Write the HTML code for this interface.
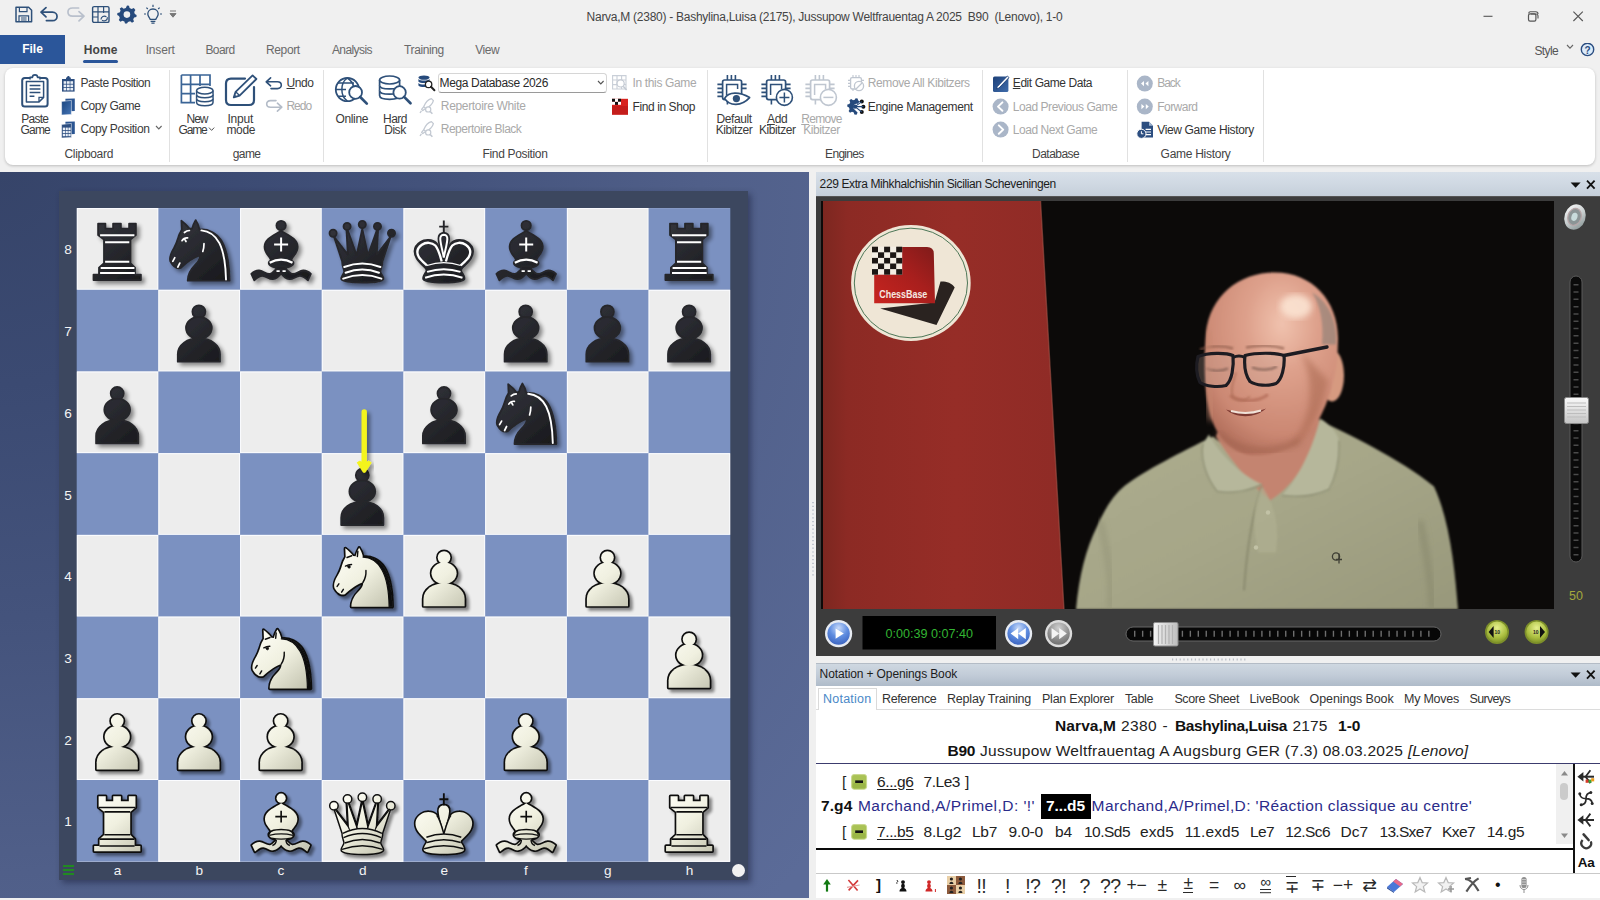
<!DOCTYPE html>
<html lang="en">
<head>
<meta charset="utf-8">
<title>ChessBase</title>
<style>
*{box-sizing:border-box;margin:0;padding:0}
html,body{width:1600px;height:900px;overflow:hidden}
body{position:relative;background:#f0f0f0;font-family:"Liberation Sans",sans-serif;font-size:12px;color:#333;}
.abs{position:absolute}
.t{position:absolute;white-space:nowrap;line-height:14px;font-size:12px;color:#3a3a3a}
.dis{color:#a9a9a9}
u{text-decoration-thickness:1px;text-underline-offset:.5px}
/* ---------- title / tabs ---------- */
#title{left:0;top:0;width:1600px;height:34px;background:#f0f0f0}
#tabs{left:0;top:34px;width:1600px;height:33px;background:#f0f0f0}
#file{left:0;top:35px;width:65px;height:29px;background:#2b569a;color:#fff;font-weight:bold;font-size:12px;line-height:28px;text-align:center}
.tab{position:absolute;top:43px;font-size:12px;line-height:14px;color:#666;white-space:nowrap}
#ribbon{left:5px;top:68px;width:1590px;height:97px;background:#fff;border-radius:8px;box-shadow:0 1px 3px rgba(0,0,0,.22)}
.sep{position:absolute;top:70px;width:1px;height:92px;background:#e1e1e1}
.glabel{position:absolute;top:146px;font-size:12px;line-height:14px;color:#444;white-space:nowrap;transform:translateX(-50%)}
.big{position:absolute;font-size:12px;line-height:11.5px;color:#3a3a3a;text-align:center;white-space:nowrap;transform:translateX(-50%)}
/* ---------- board ---------- */
#boardpane{left:0;top:172px;width:809px;height:726px;background:radial-gradient(circle 1060px at 0% 0%,#364469 0%,#3b4a72 20%,#44537c 42%,#505f89 66%,#5b6b98 100%)}
#frame{left:59.3px;top:191.2px;width:689.2px;height:688.8px;background:#3c475f;box-shadow:3px 3px 6px rgba(20,25,50,.45)}
#squares{left:76.7px;top:208.1px;width:653.5px;height:654px;background:#ededed}
.coord{position:absolute;color:#f4f4f4;font-size:13.6px;line-height:14px;width:20px;text-align:center}
/* ---------- right panes ---------- */
#split{left:810px;top:172px;width:6px;height:726px;background:#f0f0f0}
.phead{position:absolute;left:816px;width:784px;height:23px;background:linear-gradient(#d8e0e9,#cfd8e2 50%,#c4ced9);color:#1c1c1c;font-size:12px;line-height:23px;padding-left:3px;white-space:nowrap}
#video{left:816px;top:196px;width:784px;height:460px;background:#3c3c3c;border-top:1px solid #555}
#notation{left:816px;top:686px;width:784px;height:212px;background:#fff}
</style>
</head>
<body>
<div id="title" class="abs"></div>
<div id="tabs" class="abs"></div>
<div id="file" class="abs">File</div>
<div id="ribbon" class="abs"></div>
<div class="t " style="left:586.6px;top:9.8px;font-size:12px;color:#444;letter-spacing:-0.27px;">Narva,M (2380) - Bashylina,Luisa (2175), Jussupow Weltfrauentag A 2025&nbsp; B90&nbsp; (Lenovo), 1-0</div>
<svg class="abs" style="left:14px;top:5px" width="20" height="19" viewBox="0 0 20 19"><path d="M2,2.2 H14.6 L17.6,5.2 V16.8 H2 Z" fill="none" stroke="#2e5079" stroke-width="1.5" stroke-linejoin="round"/><path d="M5.4,2.4 V6.6 H13 V2.4 M5,16.6 V10.8 H14.6 V16.6 M7,13 H12.6 M7,15 H12.6" fill="none" stroke="#2e5079" stroke-width="1.2"/></svg>
<svg class="abs" style="left:39px;top:6px" width="21" height="17" viewBox="0 0 21 17"><path d="M7,1.6 L2,6.2 L7,10.8 M2.4,6.2 H13.4 C19.6,6.2 19.6,14.6 13.4,14.6 H7.4" fill="none" stroke="#2e5079" stroke-width="1.7" stroke-linecap="round" stroke-linejoin="round"/></svg>
<svg class="abs" style="left:65px;top:6px" width="21" height="17" viewBox="0 0 21 17"><path d="M14,5.6 L19,10.2 L14,14.8 M18.6,10.2 H7.6 C1.4,10.2 1.4,2 7.6,2 H13.6" fill="none" stroke="#b9c0cc" stroke-width="1.7" stroke-linecap="round" stroke-linejoin="round"/></svg>
<svg class="abs" style="left:91px;top:5px" width="20" height="19" viewBox="0 0 20 19"><rect x="1.6" y="1.6" width="16.4" height="15.8" rx="1.5" fill="none" stroke="#2e5079" stroke-width="1.4"/><path d="M7,1.6 V17.4 M12.6,1.6 V8 M1.6,6.8 H18 M1.6,12 H7" stroke="#2e5079" stroke-width="1.2" fill="none"/><path d="M10,14.6 C10,11.6 13,10.2 15.4,11.8 M16.4,12.2 C16.6,15.4 13.4,16.8 11,15.2" stroke="#2e5079" stroke-width="1.2" fill="none"/></svg>
<svg class="abs" style="left:117px;top:5px" width="20" height="19" viewBox="0 0 20 19"><path d="M10,1 L12,1.3 L12.6,3.6 L14.6,4.6 L16.8,3.6 L18.4,5.6 L17.2,7.6 L17.8,9.6 L19.6,10.4 L19.4,12.6 L17.2,13 L16.2,14.8 L17,17 L15,18.2 L13.2,16.8 L11,17.4 L10,19 L8,19 L7.4,17 L5.4,16.2 L3.4,17.2 L1.8,15.4 L2.8,13.4 L2,11.4 L0.2,10.6 L0.4,8.4 L2.6,8 L3.6,6.2 L2.8,4 L4.8,2.8 L6.6,4.2 L8.8,3.6 Z" fill="#264a7c" transform="translate(0,-0.5)"/><circle cx="9.9" cy="9.6" r="3.3" fill="#f0f0f0"/></svg>
<svg class="abs" style="left:143px;top:4px" width="20" height="21" viewBox="0 0 20 21"><path d="M10,5 C6.6,5 4.8,7.6 4.8,10 C4.8,12.4 6.6,13.4 7.2,15.4 H12.8 C13.4,13.4 15.2,12.4 15.2,10 C15.2,7.6 13.4,5 10,5 Z M7.6,17.4 H12.4 M8.4,19.2 H11.6" fill="none" stroke="#2e5079" stroke-width="1.3"/><path d="M10,0.8 V3 M3.4,3.6 L4.8,5 M16.6,3.6 L15.2,5 M1,10 H3 M17,10 H19" stroke="#2e5079" stroke-width="1.2"/></svg>
<svg class="abs" style="left:169px;top:10px" width="8" height="9" viewBox="0 0 8 9"><path d="M1,1 H7 M1,3.6 H7 L4,7.2 Z" fill="#777" stroke="#777" stroke-width="1"/></svg>
<svg class="abs" style="left:1480px;top:8px" width="110" height="18" viewBox="0 0 110 18"><path d="M3.5,8.3 H12.5" stroke="#555" stroke-width="1.1"/><path d="M50.4,6 H55.6 Q57.6,6 57.6,8 V10.6 M48.4,5.4 Q48.4,3.8 50,3.8 H55.4 Q57.6,3.8 57.6,6" fill="none" stroke="#555" stroke-width="1.1" transform="translate(0.4,0)"/><rect x="48.5" y="5.8" width="7.4" height="7.4" rx="1.6" fill="none" stroke="#555" stroke-width="1.2"/><path d="M93.4,3.6 L102.8,13 M102.8,3.6 L93.4,13" stroke="#555" stroke-width="1.1"/></svg>
<div class="abs" style="left:82.6px;top:60.4px;width:35.6px;height:3px;border-radius:1.5px;background:#2b569a"></div>
<div class="t " style="left:83.8px;top:43.1px;font-size:12px;letter-spacing:0.115px;font-weight:bold;color:#444;">Home</div>
<div class="t " style="left:145.7px;top:43.1px;font-size:12px;letter-spacing:-0.185px;color:#6a6a6a;">Insert</div>
<div class="t " style="left:205.4px;top:43.1px;font-size:12px;letter-spacing:-0.584px;color:#6a6a6a;">Board</div>
<div class="t " style="left:266.0px;top:43.1px;font-size:12px;letter-spacing:-0.369px;color:#6a6a6a;">Report</div>
<div class="t " style="left:331.9px;top:43.1px;font-size:12px;letter-spacing:-0.573px;color:#6a6a6a;">Analysis</div>
<div class="t " style="left:404.1px;top:43.1px;font-size:12px;letter-spacing:-0.388px;color:#6a6a6a;">Training</div>
<div class="t " style="left:475.3px;top:43.1px;font-size:12px;letter-spacing:-0.473px;color:#6a6a6a;">View</div>
<div class="t " style="left:1534.5px;top:44.0px;font-size:12px;letter-spacing:-0.635px;color:#555;">Style</div>
<svg class="abs" style="left:1565px;top:43px" width="30" height="14" viewBox="0 0 30 14"><path d="M2,2 L5,5.2 L8,2" fill="none" stroke="#666" stroke-width="1.1"/><circle cx="22.5" cy="6.4" r="6.2" fill="#dcebfa" stroke="#2a4d80" stroke-width="1.4"/></svg>
<div class="t " style="left:1584.4px;top:43.9px;font-size:10px;font-weight:bold;color:#2a4d80;">?</div>
<div class="sep" style="left:169.1px"></div>
<div class="sep" style="left:322.9px"></div>
<div class="sep" style="left:706.5px"></div>
<div class="sep" style="left:982.3px"></div>
<div class="sep" style="left:1126.7px"></div>
<div class="sep" style="left:1262.6px"></div>
<div class="t " style="left:64.5px;top:146.6px;font-size:12px;letter-spacing:-0.318px;color:#444;">Clipboard</div>
<div class="t " style="left:232.8px;top:146.6px;font-size:12px;letter-spacing:-0.629px;color:#444;">game</div>
<div class="t " style="left:482.5px;top:146.6px;font-size:12px;letter-spacing:-0.336px;color:#444;">Find Position</div>
<div class="t " style="left:825.1px;top:146.6px;font-size:12px;letter-spacing:-0.695px;color:#444;">Engines</div>
<div class="t " style="left:1032.1px;top:146.6px;font-size:12px;letter-spacing:-0.546px;color:#444;">Database</div>
<div class="t " style="left:1160.6px;top:146.6px;font-size:12px;letter-spacing:-0.279px;color:#444;">Game History</div>
<svg class="abs" style="left:20px;top:72px" width="30" height="37" viewBox="0 0 30 37"><rect x="2.2" y="6" width="25.4" height="28.6" rx="2.6" fill="none" stroke="#2e5079" stroke-width="2"/><path d="M10,7.6 V5.4 H12.4 C12.4,2 17.6,2 17.6,5.4 H20 V7.6" fill="#fff" stroke="#2e5079" stroke-width="1.6" stroke-linejoin="round"/><path d="M6.4,9.4 V30 H19 L23.6,25.4 V9.4 Z" fill="#fff" stroke="#2e5079" stroke-width="1.5" stroke-linejoin="round"/><path d="M19,30 V25.4 H23.6" fill="none" stroke="#2e5079" stroke-width="1.3"/><path d="M9.6,13.4 H20.4 M9.6,17 H20.4 M9.6,20.6 H20.4 M9.6,24.2 H14.4" stroke="#2e5079" stroke-width="1.5"/></svg>
<div class="t " style="left:21.2px;top:111.7px;font-size:12px;letter-spacing:-0.737px;">Paste</div>
<div class="t " style="left:20.5px;top:122.9px;font-size:12px;letter-spacing:-0.794px;">Game</div>
<svg class="abs" style="left:60px;top:75px" width="17" height="18" viewBox="0 0 17 18"><path d="M2,4 H14.6 V16.6 H2 Z" fill="#2c4e80"/><path d="M6,4 V2.4 H7 C7,0.4 9.8,0.4 9.8,2.4 H10.8 V4" fill="#2c4e80"/><g fill="#e8eef6"><rect x="3.6" y="6.2" width="2.7" height="2.6"/><rect x="7" y="6.2" width="2.7" height="2.6"/><rect x="10.4" y="6.2" width="2.7" height="2.6"/><rect x="3.6" y="9.6" width="2.7" height="2.6"/><rect x="7" y="9.6" width="2.7" height="2.6"/><rect x="10.4" y="9.6" width="2.7" height="2.6"/><rect x="3.6" y="13" width="2.7" height="2.4"/><rect x="7" y="13" width="2.7" height="2.4"/><rect x="10.4" y="13" width="2.7" height="2.4"/></g></svg>
<svg class="abs" style="left:60px;top:98px" width="17" height="18" viewBox="0 0 17 18"><defs><linearGradient id="cg" x1="0" y1="0" x2="1" y2="1"><stop offset="0" stop-color="#19447f"/><stop offset="1" stop-color="#4675b5"/></linearGradient></defs><path d="M5.4,0.8 L14.8,0.4 V13 L5.4,13.6 Z" fill="#2a5592"/><path d="M1.6,3.4 L11.4,2.4 V16.4 L1.6,17 Z" fill="url(#cg)" stroke="#fff" stroke-width=".5"/></svg>
<svg class="abs" style="left:60px;top:121px" width="17" height="18" viewBox="0 0 17 18"><path d="M5.4,0.8 L14.8,0.4 V13 L5.4,13.6 Z" fill="#2a5592"/><path d="M1.6,3.4 L11.4,2.4 V16.4 L1.6,17 Z" fill="#2c4e80" stroke="#fff" stroke-width=".5"/><g fill="#e8eef6"><rect x="2.8" y="6.6" width="2.2" height="2.4"/><rect x="5.6" y="6.6" width="2.2" height="2.4"/><rect x="8.4" y="6.6" width="2.2" height="2.4"/><rect x="2.8" y="9.8" width="2.2" height="2.4"/><rect x="5.6" y="9.8" width="2.2" height="2.4"/><rect x="8.4" y="9.8" width="2.2" height="2.4"/><rect x="2.8" y="13" width="2.2" height="2.2"/><rect x="5.6" y="13" width="2.2" height="2.2"/><rect x="8.4" y="13" width="2.2" height="2.2"/></g></svg>
<div class="t " style="left:80.4px;top:76.0px;font-size:12px;letter-spacing:-0.493px;">Paste Position</div>
<div class="t " style="left:80.4px;top:99.0px;font-size:12px;letter-spacing:-0.458px;">Copy Game</div>
<div class="t " style="left:80.4px;top:122.0px;font-size:12px;letter-spacing:-0.380px;">Copy Position</div>
<svg class="abs" style="left:154px;top:124px" width="10" height="8" viewBox="0 0 10 8"><path d="M2,2 L4.8,5 L7.6,2" fill="none" stroke="#666" stroke-width="1.1"/></svg>
<svg class="abs" style="left:180px;top:73px" width="35" height="35" viewBox="0 0 35 35"><path d="M1.4,2 H30 V24 M1.4,2 V29.6 H16 M10.6,2 V29.6 M20,2 V14 M1.4,11.4 H30 M1.4,20.6 H16" fill="none" stroke="#3a6496" stroke-width="1.7"/><rect x="15" y="13" width="20" height="22" fill="#fff"/><g fill="#fff" stroke="#2e5079" stroke-width="1.5"><path d="M16.6,17.6 V29.6 C16.6,33.8 33,33.8 33,29.6 V17.6"/><path d="M16.6,25.6 C16.6,29.8 33,29.8 33,25.6 M16.6,21.6 C16.6,25.8 33,25.8 33,21.6"/><ellipse cx="24.8" cy="17.6" rx="8.2" ry="3.4"/></g></svg>
<div class="t " style="left:186.5px;top:111.7px;font-size:12px;letter-spacing:-1.002px;">New</div>
<div class="t " style="left:178.5px;top:122.9px;font-size:12px;letter-spacing:-1.169px;">Game</div>
<svg class="abs" style="left:208px;top:125.5px" width="8" height="8" viewBox="0 0 8 8"><path d="M1,1.6 L3.6,4.4 L6.2,1.6" fill="none" stroke="#555" stroke-width="1"/></svg>
<svg class="abs" style="left:223px;top:73px" width="36" height="35" viewBox="0 0 36 35"><path d="M22,5.6 H8 Q3,5.6 3,10.6 V27 Q3,32 8,32 H26 Q31,32 31,27 V14" fill="none" stroke="#2e5079" stroke-width="2.2" stroke-linecap="round"/><path d="M29.6,2.4 L33.4,6 L16.6,22.6 L10.8,24.4 L12.6,18.8 Z" fill="#fff" stroke="#2e5079" stroke-width="1.8" stroke-linejoin="round"/><path d="M12.6,18.8 L16.6,22.6" stroke="#2e5079" stroke-width="1.4"/><path d="M10.8,24.4 L11.6,21.6 L13.6,23.6 Z" fill="#2e5079"/></svg>
<div class="t " style="left:227.5px;top:111.7px;font-size:12px;letter-spacing:-0.237px;">Input</div>
<div class="t " style="left:226.5px;top:122.9px;font-size:12px;letter-spacing:-0.379px;">mode</div>
<svg class="abs" style="left:264px;top:76px" width="20" height="15" viewBox="0 0 20 15"><path d="M6.6,1.8 L2.2,5.8 L6.6,9.8 M2.6,5.8 H13.4 C18.6,5.8 18.6,12.6 13.4,12.6 H7" fill="none" stroke="#2e5079" stroke-width="1.6" stroke-linecap="round" stroke-linejoin="round"/></svg>
<svg class="abs" style="left:264px;top:99px" width="20" height="15" viewBox="0 0 20 15"><path d="M13.4,4.2 L17.8,8.2 L13.4,12.2 M17.4,8.2 H6.6 C1.4,8.2 1.4,1.6 6.6,1.6 H12" fill="none" stroke="#b4bcc8" stroke-width="1.6" stroke-linecap="round" stroke-linejoin="round"/></svg>
<div class="t " style="left:286.5px;top:76.4px;font-size:12px;letter-spacing:-0.421px;"><u>U</u>ndo</div>
<div class="t dis" style="left:286.5px;top:99.4px;font-size:12px;letter-spacing:-1.046px;">Redo</div>
<svg class="abs" style="left:334px;top:75px" width="36" height="32" viewBox="0 0 36 32"><circle cx="13.4" cy="14.6" r="11.6" fill="none" stroke="#2e5079" stroke-width="1.8"/><path d="M13.4,3 C6,8 6,21 13.4,26.2 M13.4,3 C18,6 19.6,10 19.8,13 M2,14.6 H12 M4,8 H20 M4,21.2 H12" fill="none" stroke="#2e5079" stroke-width="1.5"/><circle cx="21.6" cy="17.4" r="6.4" fill="#fff" stroke="#2e5079" stroke-width="1.8"/><path d="M26.2,22.0 L32.8,28.6" stroke="#2e5079" stroke-width="2.7" stroke-linecap="round"/></svg>
<div class="t " style="left:335.5px;top:111.7px;font-size:12px;letter-spacing:-0.364px;">Online</div>
<svg class="abs" style="left:377px;top:73px" width="36" height="36" viewBox="0 0 36 36"><g fill="#fff" stroke="#2e5079" stroke-width="1.7"><path d="M2.6,7 V22.6 C2.6,27.6 22.6,27.6 22.6,22.6 V7"/><path d="M2.6,17.4 C2.6,22.4 22.6,22.4 22.6,17.4 M2.6,12.2 C2.6,17.2 22.6,17.2 22.6,12.2"/><ellipse cx="12.6" cy="7" rx="10" ry="4"/></g><circle cx="22.6" cy="19.4" r="6.2" fill="#fff" stroke="#2e5079" stroke-width="1.8"/><path d="M27.1,23.9 L33.5,30.2" stroke="#2e5079" stroke-width="2.7" stroke-linecap="round"/></svg>
<div class="t " style="left:383.0px;top:111.7px;font-size:12px;letter-spacing:-0.502px;">Hard</div>
<div class="t " style="left:384.2px;top:122.9px;font-size:12px;letter-spacing:-0.458px;">Disk</div>
<svg class="abs" style="left:417px;top:74px" width="19" height="18" viewBox="0 0 19 18"><g fill="#264a7c"><ellipse cx="7" cy="3.6" rx="5.6" ry="2.2"/><path d="M1.4,5 C3,7 11,7 12.6,5 V7.6 C11,9.6 3,9.6 1.4,7.6 Z M1.4,9 C3,11 11,11 12.6,9 V11.6 C11,13.6 3,13.6 1.4,11.6 Z"/></g><circle cx="11.6" cy="10.4" r="3.2" fill="#fff" stroke="#222" stroke-width="1.3"/><path d="M14,12.8 L17.4,16.2" stroke="#222" stroke-width="2" stroke-linecap="round"/></svg>
<div class="abs" style="left:437.5px;top:72.5px;width:169.5px;height:20.5px;border:1px solid #d6d6d6;border-bottom-color:#9a9a9a;border-radius:3.5px;background:#fff"></div>
<div class="t " style="left:439.5px;top:76.2px;font-size:12px;letter-spacing:-0.347px;color:#2a2a2a;">Mega Database 2026</div>
<svg class="abs" style="left:596px;top:79px" width="10" height="8" viewBox="0 0 10 8"><path d="M2,2 L4.8,5 L7.6,2" fill="none" stroke="#555" stroke-width="1.1"/></svg>
<svg class="abs" style="left:419px;top:97px" width="18" height="18" viewBox="0 0 18 18"><path d="M12.4,1.6 C9.6,2.4 6.4,5.6 4.8,9.6 L6.6,11.4 C10.6,9.8 13.6,6.6 14.4,3.6 Z M4.8,9.6 L2.6,12.4 L3.8,13.6 L6.6,11.4 M2.4,13.8 L1,16" fill="none" stroke="#c3c9d2" stroke-width="1.3" stroke-linejoin="round"/><circle cx="9.2" cy="12.4" r="2.6" fill="#fff" stroke="#c3c9d2" stroke-width="1.2"/><path d="M11,14.4 L13.4,16.8" stroke="#c3c9d2" stroke-width="1.5"/></svg>
<svg class="abs" style="left:419px;top:120px" width="18" height="18" viewBox="0 0 18 18"><path d="M12.4,1.6 C9.6,2.4 6.4,5.6 4.8,9.6 L6.6,11.4 C10.6,9.8 13.6,6.6 14.4,3.6 Z M4.8,9.6 L2.6,12.4 L3.8,13.6 L6.6,11.4 M2.4,13.8 L1,16" fill="none" stroke="#c3c9d2" stroke-width="1.3" stroke-linejoin="round"/><circle cx="9.2" cy="12.4" r="2.6" fill="#fff" stroke="#c3c9d2" stroke-width="1.2"/><path d="M11,14.4 L13.4,16.8" stroke="#c3c9d2" stroke-width="1.5"/></svg>
<div class="t dis" style="left:440.8px;top:99.0px;font-size:12px;letter-spacing:-0.333px;">Repertoire White</div>
<div class="t dis" style="left:440.8px;top:122.0px;font-size:12px;letter-spacing:-0.513px;">Repertoire Black</div>
<svg class="abs" style="left:611px;top:74px" width="18" height="18" viewBox="0 0 18 18"><path d="M1.6,1.6 H15 V15 H1.6 Z M6,1.6 V15 M10.6,1.6 V15 M1.6,6 H15 M1.6,10.6 H15" fill="none" stroke="#c9cfd8" stroke-width="1.1"/><circle cx="9.6" cy="9.4" r="3.6" fill="#fff" stroke="#c3c9d2" stroke-width="1.2"/><path d="M12.2,12.2 L15.6,16" stroke="#c3c9d2" stroke-width="1.5"/></svg>
<div class="t dis" style="left:632.5px;top:76.2px;font-size:12px;letter-spacing:-0.352px;">In this Game</div>
<svg class="abs" style="left:611px;top:98px" width="18" height="17" viewBox="0 0 18 17"><rect x="1" y="0.8" width="16" height="15.8" fill="#d8231f"/><path d="M1,8 H17 V16.6 H1 Z" fill="#c41d1b"/><g fill="#111"><rect x="1" y="0.8" width="3" height="3"/><rect x="7" y="0.8" width="3" height="3"/><rect x="4" y="3.8" width="3" height="3"/></g><g fill="#fff"><rect x="4" y="0.8" width="3" height="3"/><rect x="1" y="3.8" width="3" height="3"/><rect x="7" y="3.8" width="3" height="3"/></g></svg>
<div class="t " style="left:632.5px;top:99.6px;font-size:12px;letter-spacing:-0.406px;color:#333;">Find in Shop</div>
<svg class="abs" style="left:716px;top:73px" width="36" height="36" viewBox="0 0 36 36"><path d="M11.4,2 V7 M15.4,2 V7 M19.4,2 V7 M11.4,27 V31.4 M1.4,11.4 H6.4 M1.4,15.4 H6.4 M1.4,19.4 H6.4 M1.4,23.4 H6.4 M26,11.4 H30.6 M26,15.4 H30.6 " stroke="#2e5079" stroke-width="1.6" fill="none"/><rect x="6.6" y="7" width="19" height="19.6" rx="2" fill="none" stroke="#2e5079" stroke-width="1.7"/><path d="M10.6,22 V11.4 H21.6 V16" fill="none" stroke="#2e5079" stroke-width="1.5"/><path d="M8.6,25.4 C12.6,18.6 23.6,18.6 33.6,24.6 C25.6,33.4 13.6,33.4 8.6,25.4 Z" fill="#fff" stroke="#2e5079" stroke-width="1.7" stroke-linejoin="round"/><circle cx="20.4" cy="25.6" r="3.6" fill="#2e5079"/></svg>
<svg class="abs" style="left:760px;top:73px" width="36" height="36" viewBox="0 0 36 36"><path d="M11.4,2 V7 M15.4,2 V7 M19.4,2 V7 M11.4,27 V31.4 M1.4,11.4 H6.4 M1.4,15.4 H6.4 M1.4,19.4 H6.4 M1.4,23.4 H6.4 M26,11.4 H30.6 M26,15.4 H30.6 " stroke="#2e5079" stroke-width="1.6" fill="none"/><rect x="6.6" y="7" width="19" height="19.6" rx="2" fill="none" stroke="#2e5079" stroke-width="1.7"/><path d="M10.6,22 V11.4 H21.6 V16" fill="none" stroke="#2e5079" stroke-width="1.5"/><circle cx="24.4" cy="24.4" r="8" fill="#fff" stroke="#2e5079" stroke-width="1.6"/><path d="M24.4,19.4 V29.4 M19.4,24.4 H29.4" stroke="#2e5079" stroke-width="1.5"/></svg>
<svg class="abs" style="left:804px;top:73px" width="36" height="36" viewBox="0 0 36 36"><path d="M11.4,2 V7 M15.4,2 V7 M19.4,2 V7 M11.4,27 V31.4 M1.4,11.4 H6.4 M1.4,15.4 H6.4 M1.4,19.4 H6.4 M1.4,23.4 H6.4 M26,11.4 H30.6 M26,15.4 H30.6 " stroke="#bfc6d0" stroke-width="1.6" fill="none"/><rect x="6.6" y="7" width="19" height="19.6" rx="2" fill="none" stroke="#bfc6d0" stroke-width="1.7"/><path d="M10.6,22 V11.4 H21.6 V16" fill="none" stroke="#bfc6d0" stroke-width="1.5"/><circle cx="24.4" cy="24.4" r="8" fill="#fff" stroke="#bfc6d0" stroke-width="1.6"/><path d="M19.4,24.4 H29.4" stroke="#bfc6d0" stroke-width="1.5"/></svg>
<div class="t " style="left:716.6px;top:111.8px;font-size:12px;letter-spacing:-0.431px;">Default</div>
<div class="t " style="left:715.8px;top:123.0px;font-size:12px;letter-spacing:-0.427px;">Kibitzer</div>
<div class="t " style="left:767.0px;top:111.8px;font-size:12px;letter-spacing:-0.284px;"><u>A</u>dd</div>
<div class="t " style="left:759.0px;top:123.0px;font-size:12px;letter-spacing:-0.427px;">Kibitzer</div>
<div class="t dis" style="left:801.2px;top:111.8px;font-size:12px;letter-spacing:-0.697px;"><u>R</u>emove</div>
<div class="t dis" style="left:803.2px;top:123.0px;font-size:12px;letter-spacing:-0.427px;">Kibitzer</div>
<svg class="abs" style="left:847px;top:74px" width="19" height="18" viewBox="0 0 19 18"><path d="M6,1 V3.6 M9,1 V3.6 M12,1 V3.6 M1,6.4 H3.6 M1,9.4 H3.6 M1,12.4 H3.6 M6,15 V17 M14.4,6.4 H17" stroke="#bfc6d0" stroke-width="1.1"/><rect x="3.6" y="3.6" width="10.8" height="11.4" rx="1.4" fill="none" stroke="#bfc6d0" stroke-width="1.3"/><circle cx="12" cy="12" r="4.6" fill="#fff" stroke="#bfc6d0" stroke-width="1.3"/><path d="M9,15 L15,9" stroke="#bfc6d0" stroke-width="1.3"/></svg>
<svg class="abs" style="left:847px;top:97px" width="19" height="19" viewBox="0 0 19 19"><path d="M8.6,1.2 L10.6,1.4 L11.2,3.4 L13,4.4 L10.4,7 C6.6,6 4.6,11 8,13 L10.6,15.4 L9.6,17.8 L7.4,17.6 L6.8,15.6 L5,14.8 L3,15.8 L1.6,14 L2.6,12.2 L2,10.4 L0.2,9.6 L0.4,7.4 L2.4,7 L3.2,5.2 L2.4,3.2 L4.2,2 L6,3.2 L7.8,2.8 Z" fill="#264a7c"/><circle cx="8" cy="9.6" r="2.2" fill="#264a7c"/><circle cx="14.8" cy="4.6" r="2" fill="#111"/><circle cx="16.4" cy="9.8" r="2" fill="#111"/><circle cx="14.8" cy="15" r="2" fill="#111"/><path d="M8,9.6 L14.8,4.6 M8,9.6 H16.4 M8,9.6 L14.8,15" stroke="#264a7c" stroke-width="1.1"/></svg>
<div class="t dis" style="left:867.8px;top:76.4px;font-size:12px;letter-spacing:-0.412px;">Remove All Kibitzers</div>
<div class="t " style="left:867.8px;top:99.5px;font-size:12px;letter-spacing:-0.337px;color:#333;">Engine Management</div>
<svg class="abs" style="left:992px;top:75px" width="18" height="18" viewBox="0 0 18 18"><defs><linearGradient id="eg" x1="0" y1="0" x2="1" y2="1"><stop offset="0" stop-color="#1d4078"/><stop offset="1" stop-color="#3f6cab"/></linearGradient></defs><rect x="1" y="1.6" width="15.4" height="15.4" rx="1.6" fill="url(#eg)"/><path d="M15.4,1 L5.4,11.4 L4.4,14 L7,13 L17,2.6 Z" fill="#fff" stroke="#1d4078" stroke-width=".9"/></svg>
<svg class="abs" style="left:992px;top:98px" width="18" height="18" viewBox="0 0 18 18"><circle cx="8.6" cy="8.6" r="8" fill="#aab6c8"/><path d="M10.4,4.4 L6,8.6 L10.4,12.8" fill="none" stroke="#fff" stroke-width="2" stroke-linecap="round" stroke-linejoin="round"/></svg>
<svg class="abs" style="left:992px;top:121px" width="18" height="18" viewBox="0 0 18 18"><circle cx="8.6" cy="8.6" r="8" fill="#aab6c8"/><path d="M6.8,4.4 L11.2,8.6 L6.8,12.8" fill="none" stroke="#fff" stroke-width="2" stroke-linecap="round" stroke-linejoin="round"/></svg>
<div class="t " style="left:1012.8px;top:76.4px;font-size:12px;letter-spacing:-0.433px;color:#333;"><u>E</u>dit Game Data</div>
<div class="t dis" style="left:1012.8px;top:99.5px;font-size:12px;letter-spacing:-0.457px;">Load Previous Game</div>
<div class="t dis" style="left:1012.8px;top:122.5px;font-size:12px;letter-spacing:-0.451px;">Load Next Game</div>
<svg class="abs" style="left:1136px;top:75px" width="18" height="18" viewBox="0 0 18 18"><circle cx="8.8" cy="8.6" r="8" fill="#aab6c8"/><path d="M8,6 L5,8.6 L8,11.2 Z M12.4,6 L9.4,8.6 L12.4,11.2 Z" fill="#fff"/></svg>
<svg class="abs" style="left:1136px;top:98px" width="18" height="18" viewBox="0 0 18 18"><circle cx="8.8" cy="8.6" r="8" fill="#aab6c8"/><path d="M5.4,6 L8.4,8.6 L5.4,11.2 Z M9.8,6 L12.8,8.6 L9.8,11.2 Z" fill="#fff"/></svg>
<svg class="abs" style="left:1136px;top:121px" width="19" height="19" viewBox="0 0 19 19"><path d="M5.6,0.8 H13 L17,4.8 V16.6 H5.6 Z" fill="#2c4e80"/><path d="M13,0.8 V4.8 H17" fill="#9fb4d0"/><path d="M9.6,8.4 H15 M9.6,11 H15 M9.6,13.6 H15" stroke="#fff" stroke-width="1.2"/><circle cx="5.4" cy="12.8" r="4.6" fill="#2c4e80" stroke="#fff" stroke-width="1"/><path d="M5.4,10.2 V12.8 H7.4" fill="none" stroke="#fff" stroke-width="1"/></svg>
<div class="t dis" style="left:1157.2px;top:76.4px;font-size:12px;letter-spacing:-1.044px;">Back</div>
<div class="t dis" style="left:1157.2px;top:99.5px;font-size:12px;letter-spacing:-0.529px;">Forward</div>
<div class="t " style="left:1157.2px;top:122.5px;font-size:12px;letter-spacing:-0.345px;color:#333;">View Game History</div>
<div id="boardpane" class="abs"></div>
<div id="frame" class="abs"></div>
<div id="squares" class="abs"></div>
<svg width="0" height="0" style="position:absolute">
<defs>
<linearGradient id="gB" gradientUnits="userSpaceOnUse" x1="15" y1="12" x2="68" y2="76"><stop offset="0" stop-color="#34353c"/><stop offset=".55" stop-color="#25262b"/><stop offset="1" stop-color="#17171a"/></linearGradient>
<linearGradient id="gW" gradientUnits="userSpaceOnUse" x1="18" y1="14" x2="70" y2="74"><stop offset="0" stop-color="#fefef6"/><stop offset=".45" stop-color="#f0f0e0"/><stop offset="1" stop-color="#c0c0ac"/></linearGradient>
<filter id="sh" x="-20%" y="-20%" width="150%" height="150%"><feGaussianBlur in="SourceAlpha" stdDeviation="1.9"/><feOffset dx="2.6" dy="2.8"/><feComponentTransfer><feFuncA type="linear" slope=".45"/></feComponentTransfer><feMerge><feMergeNode/><feMergeNode in="SourceGraphic"/></feMerge></filter>

<!-- PAWN -->
<g id="sP"><circle cx="40.5" cy="22" r="6.5"/><ellipse cx="40.5" cy="38.2" rx="12.9" ry="11"/><path d="M19.4,71.9 L19.4,64.5 C19.4,55 29,48.4 40.5,48.4 C52,48.4 61.6,55 61.6,64.5 L61.6,71.9 Z"/></g>
<!-- ROOK -->
<g id="sR"><path d="M21.4,15.5 H28.7 V20.5 H36.4 V15.5 H44.2 V20.5 H52.4 V15.5 H59.2 V27 L53.8,31.5 V55 L58.3,59.5 V66.5 H64.2 V72 H16.8 V66.5 H22.3 V59.5 L27.3,55 V31.5 L21.4,27 Z"/></g>
<g id="dRb" fill="none" stroke="#fff" stroke-width="2"><path d="M23.4,27.1 H57.7 M28.4,34.2 H52.6 M28.4,53.6 H52.6 M24,60 H57.7 M23.4,64.9 H58.1"/></g>
<g id="dRw" fill="none" stroke="#111" stroke-width="1.6"><path d="M21.4,27 H59.2 M27.3,31.5 H53.8 M27.3,55 H53.8 M22.3,59.5 H58.3 M22.3,66.5 H58.3"/></g>
<!-- KNIGHT -->
<g id="sN"><path d="M23,12.6 C25.5,14.5 29,17.6 31,20.4 L33.6,20.8 C34.4,17.6 35.6,14.6 37.2,12 C39,14.6 40.4,18 41.2,21.6 C49,20.4 58,24.5 63,32.5 C69,42.5 71,58 71.2,72.6 L29.3,72.6 C29.3,66 32.5,61 36.5,57 C40,53.5 42,49.5 41.2,47.4 C36,49.2 28.5,54 22.5,59.8 C18.5,61 14.5,58 12,53.5 C10.6,49.5 12.5,45 15.5,40 C18.5,35 19.5,30 21,26 L23.4,21.5 Z"/></g>
<g id="dNb" fill="none" stroke="#fff" stroke-width="1.7" stroke-linecap="round"><path d="M43,22.3 C51,23 57,27.5 61,35 C65.5,44 67.3,58 67.6,71.5" stroke-width="1.9"/><path d="M23.6,32.6 C25,30.4 27,29.6 29.2,29.8 M26.3,31 L27.6,33.4"/><path d="M26,24.4 C27.6,23 29.4,22.4 31,22.4"/><path d="M45.6,35.6 C45.6,38.5 45.2,41 44.4,43.4"/><path d="M16.4,49.6 L14.4,53.2 M21.4,55 L19.4,59"/></g>
<g id="dNw" fill="none" stroke="#111" stroke-width="1.5" stroke-linecap="round"><path d="M41.2,47.4 C43.4,44 44.4,39 44.2,35.4"/><path d="M23.2,30.8 C25,29.8 27.4,29.2 29.4,29.2" /><path d="M25.2,31 C25.6,33 27.2,33.6 28.2,32 L27.6,30 Z" fill="#111" stroke-width=".8"/><path d="M24.8,22 L29.6,20.2 M35.4,21 L35.9,15.6"/><path d="M16.4,49 L14.6,51.6 M21,54.6 L19.2,57.6"/><path d="M41.2,21.6 C49,20.4 58,24.5 63,32.5 C69,42.5 71,58 71.2,72.6 L68,72.6 C67.8,58 66,43.8 60.4,34.2 C56,26.4 49,21.8 41.2,21.6 Z" fill="#111" stroke="#111" stroke-width="1.3" stroke-linejoin="round"/></g>
<!-- BISHOP -->
<g id="sB"><circle cx="41" cy="17.4" r="4.7"/><path d="M41,22.6 C46,26.5 57.6,30 57.6,38.6 C57.6,45 53,47.5 51.6,51 L30.4,51 C29,47.5 24.4,45 24.4,38.6 C24.4,30 36,26.5 41,22.6 Z"/><ellipse cx="41" cy="55" rx="12.4" ry="5"/><rect x="36" y="58" width="10" height="7"/><path d="M11.2,65.8 C13.5,63.6 16,62.2 19,62.4 C23,62.8 26,66.2 29.7,65.8 C32,65.5 33.5,63 35.5,61.5 L46.5,61.5 C48.5,63 50,65.5 52.3,65.8 C56,66.2 59,62.8 63,62.4 C66,62.2 68.5,63.6 70.8,65.8 L67.8,72.2 C65,69.8 62,67.5 59,67.9 C55,68.4 53,71.5 49.2,71 C45,70.4 42.5,67.4 41,65.3 C39.5,67.4 37,70.4 32.8,71 C29,71.5 27,68.4 23,67.9 C20,67.5 17,69.8 14.2,72.2 Z"/></g>
<g id="dBb" fill="none" stroke="#fff" stroke-width="1.9"><path d="M41,29.4 V43.4 M34,36.4 H48" stroke-width="2"/><path d="M29.6,54.6 Q41,48.6 52.4,54.6" stroke-width="2.2"/><path d="M36.4,63 H39.6 M42.4,63 H45.6" stroke-width="1.6"/></g>
<g id="dBw" fill="none" stroke="#111" stroke-width="1.5"><path d="M41,30.4 V42.4 M35,36.4 H47" stroke-width="1.7"/><path d="M28.8,55.6 Q41,52.6 53.2,55.6"/><path d="M28.6,55 C28.6,51.5 34,49.6 41,49.6 C48,49.6 53.4,51.5 53.4,55" stroke-width="1.6"/><path d="M31,58.4 Q41,60.6 51,58.4" stroke-width="1.3"/><path d="M36,60.4 C36,63.5 34,65.4 32,66 M46,60.4 C46,63.5 48,65.4 50,66"/></g>
<!-- QUEEN -->
<g id="sQ"><circle cx="11.3" cy="25.1" r="3.6"/><circle cx="25.3" cy="18.3" r="3.6"/><circle cx="40.5" cy="16.4" r="3.6"/><circle cx="55.7" cy="18.3" r="3.6"/><circle cx="69.7" cy="25.1" r="3.6"/><path d="M12.2,28.5 L26,46.5 L24.7,22 L25.9,22 L34.8,47 L40.5,20.5 L46.2,47 L55.1,22 L56.3,22 L55,46.5 L68.8,28.5 L60.6,53.5 C61,57 59,60 58.6,63.5 C59,66 61.6,68 61.6,70.7 C61.6,73.2 52,74.6 40.5,74.6 C29,74.6 19.4,73.2 19.4,70.7 C19.4,68 22,66 22.4,63.5 C22,60 20,57 20.4,53.5 Z"/></g>
<g id="dQb" fill="none" stroke="#fff" stroke-width="2" stroke-linecap="round"><path d="M22.4,58.9 Q40.5,51.9 58.6,58.9 M23.8,64.6 Q40.5,58.4 57.2,64.6 M21.4,70.5 Q40.5,63.5 59.6,70.5"/></g>
<g id="dQw" fill="none" stroke="#111" stroke-width="1.5"><path d="M20.4,53.5 Q40.5,43.5 60.6,53.5 M21.2,58 Q40.5,49.5 59.8,58 M22.4,63.5 Q40.5,56 58.6,63.5 M19.6,70 Q40.5,62.5 61.4,70"/><path d="M12.2,28.5 L26,46.5 L24.7,22 M25.9,22 L34.8,47 L40.5,20.5 L46.2,47 L55.1,22 M56.3,22 L55,46.5 L68.8,28.5" stroke-width="1.4"/><path d="M26,46.5 L27.4,50 M34.8,47 L35.2,48.4 M46.2,47 L45.8,48.4 M55,46.5 L53.6,50" stroke-width="1.2"/></g>
<!-- KING -->
<g id="sK"><path d="M40.3,24.6 C44.4,25 45.8,28 45.6,31 C45.2,38 41.6,46 40.3,53 C39,46 35.4,38 35,31 C34.8,28 36.2,25 40.3,24.6 Z"/><path d="M40.3,54 C38,46 36,38.5 33,35 C29,31 21.6,30.6 16.8,34 C10.8,38 9.8,44 13,50 C15.2,54 19,57 22.4,60.5 L40.3,60.5 Z"/><path d="M40.3,54 C42.6,46 44.6,38.5 47.6,35 C51.6,31 59,30.6 63.8,34 C69.8,38 70.8,44 67.6,50 C65.4,54 61.6,57 58.2,60.5 L40.3,60.5 Z"/><path d="M22.4,57.5 Q40.3,51 58.2,57.5 L57.6,63 C59,65 61,67.5 61,70.5 C61,73.4 52,74.6 40.3,74.6 C28.5,74.6 19.6,73.4 19.6,70.5 C19.6,67.5 21.6,65 23,63 Z"/></g>
<g id="dKx" fill="none" stroke-width="1.9"><path d="M40.3,12.3 V25 M35.7,18.5 H44.9"/></g>
<g id="dKb" fill="none" stroke="#fff" stroke-width="2.3"><path d="M38.2,53.4 C36.4,46.5 34.5,40.5 31.8,37.4 C28.4,34 22.4,33.8 18.4,36.6 C13.6,40 12.8,44.6 15.4,49.2 C17.6,52.2 20.4,54.6 23.4,57.4"/><path d="M42.4,53.4 C44.2,46.5 46.1,40.5 48.8,37.4 C52.2,34 58.2,33.8 62.2,36.6 C67,40 67.8,44.6 65.2,49.2 C63,52.2 60.2,54.6 57.2,57.4"/><path d="M40.3,26.6 C43.2,26.8 44,29 43.8,31.2 C43.4,37 41.4,43 40.3,49.5 C39.2,43 37.2,37 36.8,31.2 C36.6,29 37.4,26.8 40.3,26.6 Z" stroke-width="2"/><path d="M23.6,63.8 Q40.3,58.6 57,63.8 M21.6,69.6 Q40.3,63.4 59,69.6" stroke-width="2"/><path d="M23.4,57.4 Q40.3,51.6 57.2,57.4" stroke-width="1.2"/></g>
<g id="dKw" fill="none" stroke="#111" stroke-width="1.5"><path d="M40.3,54 C38,46 36,38.5 33,35 M40.3,54 C42.6,46 44.6,38.5 47.6,35"/><path d="M22.4,57.5 Q40.3,51 58.2,57.5 M23,63 Q40.3,57.4 57.6,63 M20,69.4 Q40.3,63 60.6,69.4"/></g>
</defs>
</svg>
<svg class="abs" style="left:0;top:172px" width="810" height="726" viewBox="0 172 810 726">
<rect x="77.2" y="208.6" width="80.7" height="80.7" fill="#ededed" stroke="#fbfcff" stroke-width="1"/>
<rect x="158.4" y="208.1" width="81.7" height="81.7" fill="#7b91c1"/>
<rect x="240.6" y="208.6" width="80.7" height="80.7" fill="#ededed" stroke="#fbfcff" stroke-width="1"/>
<rect x="321.8" y="208.1" width="81.7" height="81.7" fill="#7b91c1"/>
<rect x="404.0" y="208.6" width="80.7" height="80.7" fill="#ededed" stroke="#fbfcff" stroke-width="1"/>
<rect x="485.2" y="208.1" width="81.7" height="81.7" fill="#7b91c1"/>
<rect x="567.4" y="208.6" width="80.7" height="80.7" fill="#ededed" stroke="#fbfcff" stroke-width="1"/>
<rect x="648.6" y="208.1" width="81.7" height="81.7" fill="#7b91c1"/>
<rect x="76.7" y="289.8" width="81.7" height="81.7" fill="#7b91c1"/>
<rect x="158.9" y="290.3" width="80.7" height="80.7" fill="#ededed" stroke="#fbfcff" stroke-width="1"/>
<rect x="240.1" y="289.8" width="81.7" height="81.7" fill="#7b91c1"/>
<rect x="322.3" y="290.3" width="80.7" height="80.7" fill="#ededed" stroke="#fbfcff" stroke-width="1"/>
<rect x="403.5" y="289.8" width="81.7" height="81.7" fill="#7b91c1"/>
<rect x="485.7" y="290.3" width="80.7" height="80.7" fill="#ededed" stroke="#fbfcff" stroke-width="1"/>
<rect x="566.9" y="289.8" width="81.7" height="81.7" fill="#7b91c1"/>
<rect x="649.1" y="290.3" width="80.7" height="80.7" fill="#ededed" stroke="#fbfcff" stroke-width="1"/>
<rect x="77.2" y="372.0" width="80.7" height="80.7" fill="#ededed" stroke="#fbfcff" stroke-width="1"/>
<rect x="158.4" y="371.5" width="81.7" height="81.7" fill="#7b91c1"/>
<rect x="240.6" y="372.0" width="80.7" height="80.7" fill="#ededed" stroke="#fbfcff" stroke-width="1"/>
<rect x="321.8" y="371.5" width="81.7" height="81.7" fill="#7b91c1"/>
<rect x="404.0" y="372.0" width="80.7" height="80.7" fill="#ededed" stroke="#fbfcff" stroke-width="1"/>
<rect x="485.2" y="371.5" width="81.7" height="81.7" fill="#7b91c1"/>
<rect x="567.4" y="372.0" width="80.7" height="80.7" fill="#ededed" stroke="#fbfcff" stroke-width="1"/>
<rect x="648.6" y="371.5" width="81.7" height="81.7" fill="#7b91c1"/>
<rect x="76.7" y="453.2" width="81.7" height="81.7" fill="#7b91c1"/>
<rect x="158.9" y="453.7" width="80.7" height="80.7" fill="#ededed" stroke="#fbfcff" stroke-width="1"/>
<rect x="240.1" y="453.2" width="81.7" height="81.7" fill="#7b91c1"/>
<rect x="322.3" y="453.7" width="80.7" height="80.7" fill="#ededed" stroke="#fbfcff" stroke-width="1"/>
<rect x="403.5" y="453.2" width="81.7" height="81.7" fill="#7b91c1"/>
<rect x="485.7" y="453.7" width="80.7" height="80.7" fill="#ededed" stroke="#fbfcff" stroke-width="1"/>
<rect x="566.9" y="453.2" width="81.7" height="81.7" fill="#7b91c1"/>
<rect x="649.1" y="453.7" width="80.7" height="80.7" fill="#ededed" stroke="#fbfcff" stroke-width="1"/>
<rect x="77.2" y="535.4" width="80.7" height="80.7" fill="#ededed" stroke="#fbfcff" stroke-width="1"/>
<rect x="158.4" y="534.9" width="81.7" height="81.7" fill="#7b91c1"/>
<rect x="240.6" y="535.4" width="80.7" height="80.7" fill="#ededed" stroke="#fbfcff" stroke-width="1"/>
<rect x="321.8" y="534.9" width="81.7" height="81.7" fill="#7b91c1"/>
<rect x="404.0" y="535.4" width="80.7" height="80.7" fill="#ededed" stroke="#fbfcff" stroke-width="1"/>
<rect x="485.2" y="534.9" width="81.7" height="81.7" fill="#7b91c1"/>
<rect x="567.4" y="535.4" width="80.7" height="80.7" fill="#ededed" stroke="#fbfcff" stroke-width="1"/>
<rect x="648.6" y="534.9" width="81.7" height="81.7" fill="#7b91c1"/>
<rect x="76.7" y="616.6" width="81.7" height="81.7" fill="#7b91c1"/>
<rect x="158.9" y="617.1" width="80.7" height="80.7" fill="#ededed" stroke="#fbfcff" stroke-width="1"/>
<rect x="240.1" y="616.6" width="81.7" height="81.7" fill="#7b91c1"/>
<rect x="322.3" y="617.1" width="80.7" height="80.7" fill="#ededed" stroke="#fbfcff" stroke-width="1"/>
<rect x="403.5" y="616.6" width="81.7" height="81.7" fill="#7b91c1"/>
<rect x="485.7" y="617.1" width="80.7" height="80.7" fill="#ededed" stroke="#fbfcff" stroke-width="1"/>
<rect x="566.9" y="616.6" width="81.7" height="81.7" fill="#7b91c1"/>
<rect x="649.1" y="617.1" width="80.7" height="80.7" fill="#ededed" stroke="#fbfcff" stroke-width="1"/>
<rect x="77.2" y="698.8" width="80.7" height="80.7" fill="#ededed" stroke="#fbfcff" stroke-width="1"/>
<rect x="158.4" y="698.3" width="81.7" height="81.7" fill="#7b91c1"/>
<rect x="240.6" y="698.8" width="80.7" height="80.7" fill="#ededed" stroke="#fbfcff" stroke-width="1"/>
<rect x="321.8" y="698.3" width="81.7" height="81.7" fill="#7b91c1"/>
<rect x="404.0" y="698.8" width="80.7" height="80.7" fill="#ededed" stroke="#fbfcff" stroke-width="1"/>
<rect x="485.2" y="698.3" width="81.7" height="81.7" fill="#7b91c1"/>
<rect x="567.4" y="698.8" width="80.7" height="80.7" fill="#ededed" stroke="#fbfcff" stroke-width="1"/>
<rect x="648.6" y="698.3" width="81.7" height="81.7" fill="#7b91c1"/>
<rect x="76.7" y="780.0" width="81.7" height="81.7" fill="#7b91c1"/>
<rect x="158.9" y="780.5" width="80.7" height="80.7" fill="#ededed" stroke="#fbfcff" stroke-width="1"/>
<rect x="240.1" y="780.0" width="81.7" height="81.7" fill="#7b91c1"/>
<rect x="322.3" y="780.5" width="80.7" height="80.7" fill="#ededed" stroke="#fbfcff" stroke-width="1"/>
<rect x="403.5" y="780.0" width="81.7" height="81.7" fill="#7b91c1"/>
<rect x="485.7" y="780.5" width="80.7" height="80.7" fill="#ededed" stroke="#fbfcff" stroke-width="1"/>
<rect x="566.9" y="780.0" width="81.7" height="81.7" fill="#7b91c1"/>
<rect x="649.1" y="780.5" width="80.7" height="80.7" fill="#ededed" stroke="#fbfcff" stroke-width="1"/>
<g transform="translate(76.7,208.1)" filter="url(#sh)"><use href="#sR" fill="url(#gB)" stroke="#26272c" stroke-width="1.8" stroke-linejoin="round"/><use href="#dRb"/></g>
<g transform="translate(158.4,208.1)" filter="url(#sh)"><use href="#sN" fill="url(#gB)" stroke="#26272c" stroke-width="1.8" stroke-linejoin="round"/><use href="#dNb"/></g>
<g transform="translate(240.1,208.1)" filter="url(#sh)"><use href="#sB" fill="url(#gB)" stroke="#26272c" stroke-width="1.8" stroke-linejoin="round"/><use href="#dBb"/></g>
<g transform="translate(321.8,208.1)" filter="url(#sh)"><use href="#sQ" fill="url(#gB)" stroke="#26272c" stroke-width="1.8" stroke-linejoin="round"/><use href="#dQb"/></g>
<g transform="translate(403.5,208.1)" filter="url(#sh)"><use href="#sK" fill="url(#gB)" stroke="#26272c" stroke-width="1.8" stroke-linejoin="round"/><use href="#dKx" stroke="#222327"/><use href="#dKb"/></g>
<g transform="translate(485.2,208.1)" filter="url(#sh)"><use href="#sB" fill="url(#gB)" stroke="#26272c" stroke-width="1.8" stroke-linejoin="round"/><use href="#dBb"/></g>
<g transform="translate(648.6,208.1)" filter="url(#sh)"><use href="#sR" fill="url(#gB)" stroke="#26272c" stroke-width="1.8" stroke-linejoin="round"/><use href="#dRb"/></g>
<g transform="translate(158.4,289.8)" filter="url(#sh)"><use href="#sP" fill="url(#gB)" stroke="#26272c" stroke-width="1.8" stroke-linejoin="round"/></g>
<g transform="translate(485.2,289.8)" filter="url(#sh)"><use href="#sP" fill="url(#gB)" stroke="#26272c" stroke-width="1.8" stroke-linejoin="round"/></g>
<g transform="translate(566.9,289.8)" filter="url(#sh)"><use href="#sP" fill="url(#gB)" stroke="#26272c" stroke-width="1.8" stroke-linejoin="round"/></g>
<g transform="translate(648.6,289.8)" filter="url(#sh)"><use href="#sP" fill="url(#gB)" stroke="#26272c" stroke-width="1.8" stroke-linejoin="round"/></g>
<g transform="translate(76.7,371.5)" filter="url(#sh)"><use href="#sP" fill="url(#gB)" stroke="#26272c" stroke-width="1.8" stroke-linejoin="round"/></g>
<g transform="translate(403.5,371.5)" filter="url(#sh)"><use href="#sP" fill="url(#gB)" stroke="#26272c" stroke-width="1.8" stroke-linejoin="round"/></g>
<g transform="translate(485.2,371.5)" filter="url(#sh)"><use href="#sN" fill="url(#gB)" stroke="#26272c" stroke-width="1.8" stroke-linejoin="round"/><use href="#dNb"/></g>
<g transform="translate(321.8,453.2)" filter="url(#sh)"><use href="#sP" fill="url(#gB)" stroke="#26272c" stroke-width="1.8" stroke-linejoin="round"/></g>
<g transform="translate(322.9,536.1) scale(.974)" filter="url(#sh)"><use href="#sN" fill="#111" stroke="#111" stroke-width="3.5" stroke-linejoin="round"/><use href="#sN" fill="url(#gW)"/><use href="#dNw"/></g>
<g transform="translate(404.6,536.1) scale(.974)" filter="url(#sh)"><use href="#sP" fill="#111" stroke="#111" stroke-width="3.5" stroke-linejoin="round"/><use href="#sP" fill="url(#gW)"/></g>
<g transform="translate(568.0,536.1) scale(.974)" filter="url(#sh)"><use href="#sP" fill="#111" stroke="#111" stroke-width="3.5" stroke-linejoin="round"/><use href="#sP" fill="url(#gW)"/></g>
<g transform="translate(241.2,617.8) scale(.974)" filter="url(#sh)"><use href="#sN" fill="#111" stroke="#111" stroke-width="3.5" stroke-linejoin="round"/><use href="#sN" fill="url(#gW)"/><use href="#dNw"/></g>
<g transform="translate(649.7,617.8) scale(.974)" filter="url(#sh)"><use href="#sP" fill="#111" stroke="#111" stroke-width="3.5" stroke-linejoin="round"/><use href="#sP" fill="url(#gW)"/></g>
<g transform="translate(77.8,699.5) scale(.974)" filter="url(#sh)"><use href="#sP" fill="#111" stroke="#111" stroke-width="3.5" stroke-linejoin="round"/><use href="#sP" fill="url(#gW)"/></g>
<g transform="translate(159.5,699.5) scale(.974)" filter="url(#sh)"><use href="#sP" fill="#111" stroke="#111" stroke-width="3.5" stroke-linejoin="round"/><use href="#sP" fill="url(#gW)"/></g>
<g transform="translate(241.2,699.5) scale(.974)" filter="url(#sh)"><use href="#sP" fill="#111" stroke="#111" stroke-width="3.5" stroke-linejoin="round"/><use href="#sP" fill="url(#gW)"/></g>
<g transform="translate(486.3,699.5) scale(.974)" filter="url(#sh)"><use href="#sP" fill="#111" stroke="#111" stroke-width="3.5" stroke-linejoin="round"/><use href="#sP" fill="url(#gW)"/></g>
<g transform="translate(77.8,781.2) scale(.974)" filter="url(#sh)"><use href="#sR" fill="#111" stroke="#111" stroke-width="3.5" stroke-linejoin="round"/><use href="#sR" fill="url(#gW)"/><use href="#dRw"/></g>
<g transform="translate(241.2,781.2) scale(.974)" filter="url(#sh)"><use href="#sB" fill="#111" stroke="#111" stroke-width="3.5" stroke-linejoin="round"/><use href="#sB" fill="url(#gW)"/><use href="#dBw"/></g>
<g transform="translate(322.9,781.2) scale(.974)" filter="url(#sh)"><use href="#sQ" fill="#111" stroke="#111" stroke-width="3.0" stroke-linejoin="round"/><use href="#sQ" fill="url(#gW)"/><use href="#dQw"/></g>
<g transform="translate(404.6,781.2) scale(.974)" filter="url(#sh)"><use href="#sK" fill="#111" stroke="#111" stroke-width="3.5" stroke-linejoin="round"/><use href="#sK" fill="url(#gW)"/><use href="#dKx" stroke="#111"/><use href="#dKw"/></g>
<g transform="translate(486.3,781.2) scale(.974)" filter="url(#sh)"><use href="#sB" fill="#111" stroke="#111" stroke-width="3.5" stroke-linejoin="round"/><use href="#sB" fill="url(#gW)"/><use href="#dBw"/></g>
<g transform="translate(649.7,781.2) scale(.974)" filter="url(#sh)"><use href="#sR" fill="#111" stroke="#111" stroke-width="3.5" stroke-linejoin="round"/><use href="#sR" fill="url(#gW)"/><use href="#dRw"/></g>
<g filter="url(#sh)"><path d="M364.2,412 V466" stroke="#f4f41c" stroke-width="5.4" stroke-linecap="round" fill="none"/><path d="M358.4,461.5 L364.2,470.8 L370,461.5" stroke="#f4f41c" stroke-width="4" fill="#f4f41c" stroke-linejoin="round"/></g>
</svg>
<div class="coord" style="left:58px;top:243.3px">8</div>
<div class="coord" style="left:107.6px;top:864px">a</div>
<div class="coord" style="left:58px;top:325.1px">7</div>
<div class="coord" style="left:189.2px;top:864px">b</div>
<div class="coord" style="left:58px;top:406.8px">6</div>
<div class="coord" style="left:271.0px;top:864px">c</div>
<div class="coord" style="left:58px;top:488.5px">5</div>
<div class="coord" style="left:352.7px;top:864px">d</div>
<div class="coord" style="left:58px;top:570.1px">4</div>
<div class="coord" style="left:434.4px;top:864px">e</div>
<div class="coord" style="left:58px;top:651.9px">3</div>
<div class="coord" style="left:516.0px;top:864px">f</div>
<div class="coord" style="left:58px;top:733.6px">2</div>
<div class="coord" style="left:597.8px;top:864px">g</div>
<div class="coord" style="left:58px;top:815.2px">1</div>
<div class="coord" style="left:679.5px;top:864px">h</div>
<div class="abs" style="left:63px;top:865px;width:11px;height:2px;background:#218a21;box-shadow:0 4px 0 #218a21,0 8px 0 #218a21"></div>
<div class="abs" style="left:732px;top:864px;width:13px;height:13px;border-radius:50%;background:#f2f2f2"></div>
<div id="split" class="abs"></div>
<div class="phead" style="top:172px;height:24.5px"></div>
<div id="video" class="abs"></div>
<div id="vstrip" class="abs" style="left:820.5px;top:200.5px;width:3px;height:408.5px;background:#0d0a09"></div>
<svg class="abs" style="left:823px;top:200.5px" width="730.5" height="408.5" viewBox="823 200.5 730.5 408.5">
<defs>
<linearGradient id="vRed" x1="0" y1="0" x2="1" y2="0"><stop offset="0" stop-color="#7c2720"/><stop offset=".1" stop-color="#8c2a24"/><stop offset=".55" stop-color="#962d27"/><stop offset="1" stop-color="#8f2b26"/></linearGradient>
<linearGradient id="vLogo" x1="0" y1="1" x2="1" y2="0"><stop offset="0" stop-color="#c8241f"/><stop offset=".55" stop-color="#a81f1d"/><stop offset="1" stop-color="#7f1b1a"/></linearGradient>
<radialGradient id="vSkin" cx=".58" cy=".28" r=".75"><stop offset="0" stop-color="#f0c2ae"/><stop offset=".35" stop-color="#dea18c"/><stop offset=".8" stop-color="#cb8873"/><stop offset="1" stop-color="#b3705d"/></radialGradient>
<linearGradient id="vShirt" x1="0" y1="0" x2="1" y2="1"><stop offset="0" stop-color="#adad8f"/><stop offset=".5" stop-color="#a6a688"/><stop offset="1" stop-color="#98987b"/></linearGradient>
<filter id="vb1"><feGaussianBlur stdDeviation="1.2"/></filter>
<filter id="vb3"><feGaussianBlur stdDeviation="3"/></filter>
<filter id="vb6"><feGaussianBlur stdDeviation="7"/></filter>
</defs>
<rect x="823" y="200" width="731" height="409" fill="#0c0a09"/>
<!-- red banner -->
<path d="M823,200 H1040.5 L1064,609 H823 Z" fill="url(#vRed)"/>
<path d="M1040.5,200 L1064,609" stroke="#a8564a" stroke-width="1.4" opacity=".55"/>

<!-- logo -->
<ellipse cx="910.9" cy="282.5" rx="59.8" ry="58" fill="#efe6d6"/>
<ellipse cx="910.9" cy="282.5" rx="56.6" ry="54.8" fill="none" stroke="#3a6a48" stroke-width=".9"/>
<path d="M880.2,308 L934.5,302 L940.5,281 C945,280.6 952,282 954.7,287 L936.5,324.5 Z" fill="#2a2320"/>
<path d="M874.2,246.5 H927 Q933.7,246.5 933.8,253 L935,302.7 H874.2 Z" fill="url(#vLogo)"/>
<g fill="#1c1714"><rect x="872" y="246.2" width="30.2" height="28" fill="#f3eee4"/>
<rect x="872" y="246.2" width="6" height="5.6"/><rect x="884.1" y="246.2" width="6" height="5.6"/><rect x="896.2" y="246.2" width="6" height="5.6"/>
<rect x="878" y="251.8" width="6.1" height="5.6"/><rect x="890.1" y="251.8" width="6.1" height="5.6"/>
<rect x="872" y="257.4" width="6" height="5.6"/><rect x="884.1" y="257.4" width="6" height="5.6"/><rect x="896.2" y="257.4" width="6" height="5.6"/>
<rect x="878" y="263" width="6.1" height="5.6"/><rect x="890.1" y="263" width="6.1" height="5.6"/>
<rect x="872" y="268.6" width="6" height="5.6"/><rect x="884.1" y="268.6" width="6" height="5.6"/><rect x="896.2" y="268.6" width="6" height="5.6"/></g>
<text x="879.3" y="297.8" font-family="Liberation Sans,sans-serif" font-weight="bold" font-size="11.6" fill="#f6e9e2" textLength="48" lengthAdjust="spacingAndGlyphs">ChessBase</text>
<!-- person -->
<g filter="url(#vb1)">
<!-- shirt -->
<path d="M1076,609 C1079,575 1086,548 1097,526 C1106,506 1114,494 1125,485 C1145,470 1180,452 1213,436 L1240,458 L1300,450 L1320,420 C1345,432 1400,458 1434,486 C1450,520 1455,570 1458,609 Z" fill="url(#vShirt)"/>
<!-- neck -->
<path d="M1222,420 L1316,400 L1320,424 C1314,452 1296,484 1270,500 C1250,484 1228,456 1216,436 Z" fill="#c4846f"/>
<!-- collar -->
<path d="M1209,434 C1218,452 1240,474 1262,484 C1250,490 1232,494 1217,491 C1205,476 1200,456 1203,443 Z" fill="#b6b79b"/>
<path d="M1320,418 C1330,424 1337,432 1339,440 C1340,458 1336,476 1329,489 C1314,496 1296,497 1282,495 C1296,480 1312,452 1320,418 Z" fill="#b6b79b"/>
<!-- ear -->
<ellipse cx="1332" cy="375" rx="12" ry="26" fill="#d69a80"/>
<!-- head -->
<path d="M1275,272 C1312,272 1338,300 1338,338 C1338,372 1330,400 1316,424 C1300,448 1270,458 1246,454 C1226,448 1212,430 1208,404 C1204,384 1204,356 1206,332 C1210,296 1238,272 1275,272 Z" fill="url(#vSkin)"/>
</g>
<!-- shading -->
<ellipse cx="1296" cy="306" rx="16" ry="12" fill="#fbe3d2" filter="url(#vb3)" opacity=".9"/>
<path d="M1300,350 C1316,380 1312,420 1290,446 C1306,440 1324,410 1328,380 Z" fill="#a8684f" filter="url(#vb3)" opacity=".55"/>
<path d="M1312,292 C1328,300 1338,322 1336,344 L1322,344 C1324,322 1320,304 1312,292 Z" fill="#8a8078" filter="url(#vb1)" opacity=".6"/>
<path d="M1230,395 C1240,402 1258,402 1268,394" stroke="#a9614e" stroke-width="3" fill="none" filter="url(#vb1)" opacity=".6"/>
<path d="M1200,349 C1210,345 1224,345 1233,348 M1246,347 C1258,344 1274,345 1284,348" stroke="#8a5a48" stroke-width="2.4" fill="none" filter="url(#vb1)" opacity=".7"/>
<path d="M1206,368 C1212,371 1222,371 1228,368 M1252,367 C1260,370 1270,370 1277,366" stroke="#5a3a32" stroke-width="2.2" fill="none" filter="url(#vb1)" opacity=".75"/>
<path d="M1236,372 C1232,384 1230,392 1234,398 C1240,401 1246,400 1250,396" stroke="#b0705a" stroke-width="2.2" fill="none" filter="url(#vb1)" opacity=".7"/>
<path d="M1218,432 C1236,452 1270,456 1300,440" stroke="#9a5f4a" stroke-width="5" fill="none" filter="url(#vb3)" opacity=".6"/>
<path d="M1208,330 C1206,360 1206,392 1212,420" stroke="#c98a72" stroke-width="6" fill="none" filter="url(#vb3)" opacity=".7"/>
<!-- mouth -->
<path d="M1226,409 C1238,413 1254,413 1266,408 C1256,418 1236,418 1226,409 Z" fill="#7d3a32"/>
<path d="M1231,410.5 C1240,413 1252,413 1261,410" stroke="#f0e2d8" stroke-width="2" fill="none"/>
<!-- glasses -->
<g fill="rgba(200,170,160,.25)" stroke="#1d1c22" stroke-width="3.2" stroke-linejoin="round">
<path d="M1198,356 C1208,352 1226,352 1233,355 C1234,366 1232,380 1226,385 C1218,387 1206,386 1200,382 C1196,374 1196,364 1198,356 Z"/>
<path d="M1245,355 C1256,352 1276,352 1284,355 C1285,366 1282,379 1276,383 C1268,386 1256,385 1250,381 C1245,374 1244,364 1245,355 Z"/>
</g>
<path d="M1233,357 Q1239,354 1245,357" stroke="#1d1c22" stroke-width="3" fill="none"/>
<path d="M1284,355 L1327,346.5" stroke="#1d1c22" stroke-width="3.4" fill="none" stroke-linecap="round"/>
<!-- shirt details -->
<path d="M1262,486 C1250,520 1246,560 1244,590" stroke="#8b8b6f" stroke-width="2" fill="none" filter="url(#vb1)"/>
<path d="M1100,520 C1110,560 1112,590 1110,609" stroke="#8e8e72" stroke-width="3" fill="none" filter="url(#vb3)"/>
<path d="M1420,520 C1428,560 1432,590 1432,609" stroke="#86866a" stroke-width="4" fill="none" filter="url(#vb3)"/>
<path d="M1262,486 C1272,500 1280,520 1276,552 L1258,552 C1252,524 1254,500 1262,486 Z" fill="#b0b092" opacity=".7" filter="url(#vb1)"/><path d="M1203,443 C1200,456 1205,476 1217,491 C1232,494 1250,490 1262,484 M1339,440 C1340,458 1336,476 1329,489 C1314,496 1296,497 1282,495" stroke="#8f9074" stroke-width="1.4" fill="none" filter="url(#vb1)"/><circle cx="1268" cy="512" r="2.2" fill="#c2c2a6"/><circle cx="1256" cy="547" r="2.2" fill="#c2c2a6"/>
<g stroke="#3e3e34" stroke-width="1.3" fill="none"><circle cx="1336" cy="556" r="3.6"/><path d="M1339,553 V563 M1336,559 H1342"/></g>
</svg>
<!-- volume -->
<svg class="abs" style="left:1554px;top:197px" width="46" height="459" viewBox="1554 197 46 459">
<defs><linearGradient id="vSil" x1="0" y1="0" x2="1" y2="1"><stop offset="0" stop-color="#ffffff"/><stop offset=".5" stop-color="#c9cfd0"/><stop offset="1" stop-color="#7c8a8a"/></linearGradient>
<linearGradient id="vKnob" x1="0" y1="0" x2="0" y2="1"><stop offset="0" stop-color="#fafafa"/><stop offset="1" stop-color="#c4c4c4"/></linearGradient></defs>
<ellipse cx="1575" cy="217" rx="10.5" ry="13" fill="url(#vSil)" transform="rotate(18 1575 217)"/>
<ellipse cx="1574.5" cy="217" rx="6.6" ry="8.6" fill="#8b9596" stroke="#b7a6a8" stroke-width="1.2" transform="rotate(18 1575 217)"/>
<ellipse cx="1574.4" cy="217" rx="3" ry="4.2" fill="#c8dcdc" transform="rotate(18 1575 217)"/>
<rect x="1570" y="276" width="12" height="286" rx="6" fill="#0a0a0a" stroke="#5a5a5a" stroke-width="1"/>
<path d="M1576,284 V556" stroke="#4a4a4a" stroke-width="5" stroke-dasharray="1.5 5.8" />
<rect x="1564.5" y="397.5" width="24" height="26" rx="2" fill="url(#vKnob)" stroke="#8a8a8a" stroke-width="1"/>
<path d="M1567,403 H1586 M1567,406.5 H1586 M1567,410 H1586 M1567,413.5 H1586 M1567,417 H1586" stroke="#bdbdbd" stroke-width="1"/>
<text x="1569" y="600" font-family="Liberation Sans,sans-serif" font-size="12.5" fill="#a4a83c">50</text>
</svg>
<!-- controls -->
<svg class="abs" style="left:816px;top:609px" width="784" height="47" viewBox="816 609 784 47">
<defs>
<radialGradient id="cBlue" cx=".5" cy=".25" r=".8"><stop offset="0" stop-color="#c8dafa"/><stop offset=".5" stop-color="#5f8de0"/><stop offset="1" stop-color="#3860bd"/></radialGradient>
<radialGradient id="cGrey" cx=".5" cy=".25" r=".8"><stop offset="0" stop-color="#cfcfcf"/><stop offset=".6" stop-color="#8e8e8e"/><stop offset="1" stop-color="#6a6a6a"/></radialGradient>
<radialGradient id="cGreen" cx=".5" cy=".3" r=".8"><stop offset="0" stop-color="#e6f08e"/><stop offset=".6" stop-color="#a9bd3e"/><stop offset="1" stop-color="#6f8420"/></radialGradient>
<linearGradient id="cKnob" x1="0" y1="0" x2="1" y2="0"><stop offset="0" stop-color="#f4f4f4"/><stop offset="1" stop-color="#bdbdbd"/></linearGradient>
</defs>
<rect x="862.5" y="616" width="133.5" height="33.5" fill="#000"/>
<text x="929.3" y="638" text-anchor="middle" font-family="Liberation Sans,sans-serif" font-size="12.6" fill="#33b533">0:00:39 0:07:40</text>
<g><circle cx="838.6" cy="633.6" r="13.6" fill="#e7ebf2"/><circle cx="838.6" cy="633.6" r="11.2" fill="url(#cBlue)"/><path d="M835.6,628.4 L843.8,633.6 L835.6,638.8 Z" fill="#fff"/></g>
<g><circle cx="1018.6" cy="633.6" r="13.6" fill="#e7ebf2"/><circle cx="1018.6" cy="633.6" r="11.2" fill="url(#cBlue)"/><path d="M1018.2,628 L1010.6,633.6 L1018.2,639.2 Z M1025.8,628 L1018.2,633.6 L1025.8,639.2 Z" fill="#fff"/></g>
<g><circle cx="1058.6" cy="633.6" r="13.6" fill="#dcdcdc"/><circle cx="1058.6" cy="633.6" r="11.2" fill="url(#cGrey)"/><path d="M1051.6,628 L1059.2,633.6 L1051.6,639.2 Z M1059.2,628 L1066.8,633.6 L1059.2,639.2 Z" fill="#f4f4f4"/></g>
<rect x="1126" y="627" width="315" height="14" rx="7" fill="#070707" stroke="#666" stroke-width="1"/>
<path d="M1134,633.8 H1436" stroke="#6e6e6e" stroke-width="6" stroke-dasharray="1.4 6.55"/>
<rect x="1153.5" y="622.5" width="24.5" height="23.5" rx="1.5" fill="url(#cKnob)" stroke="#8d8d8d"/>
<path d="M1158.5,625 V644 M1162,625 V644 M1165.5,625 V644 M1169,625 V644 M1172.5,625 V644" stroke="#b2b2b2" stroke-width="1.2"/>
<g><circle cx="1497" cy="632" r="12" fill="#7d8f2a"/><circle cx="1497" cy="632" r="10.4" fill="url(#cGreen)"/><path d="M1493.6,626 L1488.6,632 L1493.6,638 Z" fill="#111"/><text x="1494.6" y="634" font-family="Liberation Sans,sans-serif" font-size="5" font-weight="bold" fill="#222">10</text></g>
<g><circle cx="1536.6" cy="632" r="12" fill="#7d8f2a"/><circle cx="1536.6" cy="632" r="10.4" fill="url(#cGreen)"/><path d="M1540,626 L1545,632 L1540,638 Z" fill="#111"/><text x="1533" y="634" font-family="Liberation Sans,sans-serif" font-size="5" font-weight="bold" fill="#222">10</text></g>
</svg>

<!-- gripper --><svg class="abs" style="left:1170px;top:657px" width="80" height="5" viewBox="0 0 80 5"><path d="M2,2.5 H76" stroke="#b9bec6" stroke-width="2" stroke-dasharray="1.2 2.6"/></svg>
<svg class="abs" style="left:810px;top:500px" width="6" height="80" viewBox="0 0 6 80"><path d="M3,2 V76" stroke="#c2c7cf" stroke-width="2" stroke-dasharray="1.2 2.6"/></svg>
<div class="phead" style="top:663px;background:linear-gradient(#cfd8e1,#c2ccd8 50%,#afbbc9);border-top:1px solid #b4bcc6"></div>
<div id="notation" class="abs"></div>
<svg class="abs" style="left:1568px;top:179px" width="28" height="12" viewBox="0 0 28 12"><path d="M2.6,3.4 H12.6 L7.6,8.8 Z" fill="#111"/><path d="M19,1.6 L26.6,9.6 M26.6,1.6 L19,9.6" stroke="#111" stroke-width="1.8"/></svg>
<svg class="abs" style="left:1568px;top:669px" width="28" height="12" viewBox="0 0 28 12"><path d="M2.6,3.4 H12.6 L7.6,8.8 Z" fill="#111"/><path d="M19,1.6 L26.6,9.6 M26.6,1.6 L19,9.6" stroke="#111" stroke-width="1.8"/></svg>
<div class="t" style="left:819.6px;top:176.9px;font-size:12px;line-height:14.00px;color:#1c1c1c;letter-spacing:-0.388px;">229 Extra Mihkhalchishin Sicilian Scheveningen</div>
<div class="t" style="left:819.6px;top:667.0px;font-size:12px;line-height:14.00px;color:#1c1c1c;letter-spacing:-0.122px;">Notation + Openings Book</div>
<div class="abs" style="left:816px;top:709px;width:784px;height:1px;background:#dcdcdc"></div>
<div class="abs" style="left:818px;top:688px;width:59px;height:22px;background:#fff;border:1px solid #dadada;border-bottom:none"></div>
<div class="t" style="left:823.0px;top:692.4px;font-size:12.5px;line-height:14.58px;color:#4a88c7;letter-spacing:0.231px;">Notation</div>
<div class="t" style="left:882.0px;top:692.4px;font-size:12.5px;line-height:14.58px;color:#333;letter-spacing:-0.363px;">Reference</div>
<div class="t" style="left:947.0px;top:692.4px;font-size:12.5px;line-height:14.58px;color:#333;letter-spacing:-0.190px;">Replay Training</div>
<div class="t" style="left:1042.0px;top:692.4px;font-size:12.5px;line-height:14.58px;color:#333;letter-spacing:-0.233px;">Plan Explorer</div>
<div class="t" style="left:1125.0px;top:692.4px;font-size:12.5px;line-height:14.58px;color:#333;letter-spacing:-0.376px;">Table</div>
<div class="t" style="left:1174.4px;top:692.4px;font-size:12.5px;line-height:14.58px;color:#333;letter-spacing:-0.381px;">Score Sheet</div>
<div class="t" style="left:1249.6px;top:692.4px;font-size:12.5px;line-height:14.58px;color:#333;letter-spacing:-0.202px;">LiveBook</div>
<div class="t" style="left:1309.6px;top:692.4px;font-size:12.5px;line-height:14.58px;color:#333;letter-spacing:-0.113px;">Openings Book</div>
<div class="t" style="left:1404.0px;top:692.4px;font-size:12.5px;line-height:14.58px;color:#333;letter-spacing:-0.244px;">My Moves</div>
<div class="t" style="left:1469.6px;top:692.4px;font-size:12.5px;line-height:14.58px;color:#333;letter-spacing:-0.679px;">Surveys</div>
<div class="t" style="left:1055.0px;top:716.6px;font-size:15.5px;line-height:18.08px;color:#111;letter-spacing:0.100px;font-weight:bold;">Narva,M</div>
<div class="t" style="left:1121.0px;top:716.6px;font-size:15.5px;line-height:18.08px;color:#222;letter-spacing:0.381px;">2380</div>
<div class="t" style="left:1162.5px;top:716.6px;font-size:15.5px;line-height:18.08px;color:#222;">-</div>
<div class="t" style="left:1175.0px;top:716.6px;font-size:15.5px;line-height:18.08px;color:#111;letter-spacing:-0.400px;font-weight:bold;">Bashylina,Luisa</div>
<div class="t" style="left:1292.4px;top:716.6px;font-size:15.5px;line-height:18.08px;color:#222;letter-spacing:0.181px;">2175</div>
<div class="t" style="left:1338.0px;top:716.6px;font-size:15.5px;line-height:18.08px;color:#111;letter-spacing:0.033px;font-weight:bold;">1-0</div>
<div class="t" style="left:947.6px;top:741.6px;font-size:15.5px;line-height:18.08px;color:#111;letter-spacing:-0.311px;font-weight:bold;">B90</div>
<div class="t" style="left:980.0px;top:741.6px;font-size:15.5px;line-height:18.08px;color:#222;letter-spacing:0.276px;">Jussupow Weltfrauentag A Augsburg GER (7.3) 08.03.2025</div>
<div class="t" style="left:1408.0px;top:741.6px;font-size:15.5px;line-height:18.08px;color:#222;letter-spacing:0.068px;font-style:italic;">[Lenovo]</div>
<div class="abs" style="left:816px;top:763px;width:784px;height:1px;background:#3c3c6e"></div>
<div class="t" style="left:842.0px;top:772.6px;font-size:15.5px;line-height:18.08px;color:#222;">[</div>
<svg class="abs" style="left:851px;top:774px" width="17" height="16" viewBox="0 0 17 16"><rect x=".6" y=".6" width="15" height="14.6" rx="2.4" fill="#a9c255" stroke="#c9d88e" stroke-width="1"/><rect x="1.6" y="9" width="13" height="5.4" rx="1.6" fill="#93ae3e" opacity=".6"/><rect x="4.2" y="6.4" width="7.8" height="2.6" fill="#151515"/></svg>
<div class="t" style="left:877.0px;top:772.6px;font-size:15.5px;line-height:18.08px;color:#222;letter-spacing:-0.379px;text-decoration:underline;text-underline-offset:1.5px;">6...g6</div>
<div class="t" style="left:923.5px;top:772.6px;font-size:15.5px;line-height:18.08px;color:#222;letter-spacing:-0.457px;">7.Le3</div>
<div class="t" style="left:965.0px;top:772.6px;font-size:15.5px;line-height:18.08px;color:#222;">]</div>
<div class="t" style="left:821.0px;top:796.6px;font-size:15.5px;line-height:18.08px;color:#111;letter-spacing:0.097px;font-weight:bold;">7.g4</div>
<div class="t" style="left:858.0px;top:796.6px;font-size:15.5px;line-height:18.08px;color:#2b2b8a;letter-spacing:0.453px;">Marchand,A/Primel,D: '!'</div>
<div class="abs" style="left:1041px;top:794px;width:49.6px;height:25px;background:#000"></div>
<div class="t" style="left:1046.0px;top:796.6px;font-size:15.5px;line-height:18.08px;color:#fff;letter-spacing:-0.104px;font-weight:bold;">7...d5</div>
<div class="t" style="left:1091.6px;top:796.6px;font-size:15.5px;line-height:18.08px;color:#2b2b8a;letter-spacing:0.384px;">Marchand,A/Primel,D: 'Réaction classique au centre'</div>
<div class="t" style="left:842.0px;top:822.6px;font-size:15.5px;line-height:18.08px;color:#222;">[</div>
<svg class="abs" style="left:851px;top:823.5px" width="17" height="16" viewBox="0 0 17 16"><rect x=".6" y=".6" width="15" height="14.6" rx="2.4" fill="#a9c255" stroke="#c9d88e" stroke-width="1"/><rect x="1.6" y="9" width="13" height="5.4" rx="1.6" fill="#93ae3e" opacity=".6"/><rect x="4.2" y="6.4" width="7.8" height="2.6" fill="#151515"/></svg>
<div class="t" style="left:877.0px;top:822.6px;font-size:15.5px;line-height:18.08px;color:#222;letter-spacing:-0.379px;text-decoration:underline;text-underline-offset:1.5px;">7...b5</div>
<div class="t" style="left:923.6px;top:822.6px;font-size:15.5px;line-height:18.08px;color:#222;letter-spacing:-0.277px;">8.Lg2</div>
<div class="t" style="left:972.0px;top:822.6px;font-size:15.5px;line-height:18.08px;color:#222;letter-spacing:-0.286px;">Lb7</div>
<div class="t" style="left:1008.6px;top:822.6px;font-size:15.5px;line-height:18.08px;color:#222;letter-spacing:-0.185px;">9.0-0</div>
<div class="t" style="left:1055.0px;top:822.6px;font-size:15.5px;line-height:18.08px;color:#222;letter-spacing:-0.119px;">b4</div>
<div class="t" style="left:1084.0px;top:822.6px;font-size:15.5px;line-height:18.08px;color:#222;letter-spacing:-0.520px;">10.Sd5</div>
<div class="t" style="left:1140.0px;top:822.6px;font-size:15.5px;line-height:18.08px;color:#222;letter-spacing:0.098px;">exd5</div>
<div class="t" style="left:1184.7px;top:822.6px;font-size:15.5px;line-height:18.08px;color:#222;letter-spacing:0.114px;">11.exd5</div>
<div class="t" style="left:1250.0px;top:822.6px;font-size:15.5px;line-height:18.08px;color:#222;letter-spacing:-0.619px;">Le7</div>
<div class="t" style="left:1285.3px;top:822.6px;font-size:15.5px;line-height:18.08px;color:#222;letter-spacing:-0.592px;">12.Sc6</div>
<div class="t" style="left:1340.5px;top:822.6px;font-size:15.5px;line-height:18.08px;color:#222;letter-spacing:-0.021px;">Dc7</div>
<div class="t" style="left:1379.5px;top:822.6px;font-size:15.5px;line-height:18.08px;color:#222;letter-spacing:-0.696px;">13.Sxe7</div>
<div class="t" style="left:1442.0px;top:822.6px;font-size:15.5px;line-height:18.08px;color:#222;letter-spacing:-0.582px;">Kxe7</div>
<div class="t" style="left:1486.7px;top:822.6px;font-size:15.5px;line-height:18.08px;color:#222;letter-spacing:-0.197px;">14.g5</div>
<div class="abs" style="left:816px;top:848px;width:758px;height:2px;background:#0a0a0a"></div>
<div class="abs" style="left:816px;top:873px;width:784px;height:1px;background:#c9c9c9"></div>
<div class="abs" style="left:1573px;top:764px;width:1.6px;height:109px;background:#111"></div>
<div class="abs" style="left:1556px;top:764px;width:16.5px;height:80px;background:#f0f0f0"></div>
<div class="abs" style="left:1560px;top:782.5px;width:8px;height:17.5px;border-radius:4px;background:#cbcbcb"></div>
<svg class="abs" style="left:1557.5px;top:769px" width="13" height="8" viewBox="0 0 13 8"><path d="M3,6.4 L6.5,2 L10,6.4 Z" fill="#8a8a8a"/></svg>
<svg class="abs" style="left:1557.5px;top:832px" width="13" height="8" viewBox="0 0 13 8"><path d="M3,1.6 L6.5,6 L10,1.6 Z" fill="#8a8a8a"/></svg>
<svg class="abs" style="left:1575px;top:765px" width="25" height="90" viewBox="1575 765 25 90"><path d="M1579.5,776.7 H1594" stroke="#2a2a2a" stroke-width="2" fill="none"/><path d="M1577.4,776.7 L1583.4,771.9000000000001 V781.5 Z" fill="#2a2a2a"/><path d="M1590.4,770.3000000000001 L1585.6,776.7 L1590.4,783.1" stroke="#2a2a2a" stroke-width="1.8" fill="none"/><rect x="1585.6" y="779.6" width="3" height="3.2" fill="#d63a2a"/><rect x="1588.6" y="779.6" width="3" height="3.2" fill="#3aa43a"/><rect x="1591.2" y="778.2" width="3" height="3.2" fill="#ee9a1a"/><g stroke="#2a2a2a" stroke-width="1.7" fill="none"><path d="M1586,798.7 C1586,795 1587,793 1590.6,792.6 M1586,798.7 C1589.6,798.7 1591.8,799.8 1592.2,803.4 M1586,798.7 C1586,802.4 1585,804.4 1581.4,804.8 M1586,798.7 C1582.4,798.7 1580.2,797.6 1579.8,794"/></g><g fill="#2a2a2a"><circle cx="1590.8" cy="792.6" r="1.5"/><circle cx="1592.2" cy="803.6" r="1.5"/><circle cx="1581.2" cy="804.8" r="1.5"/><circle cx="1579.8" cy="793.8" r="1.5"/></g><path d="M1579.5,820 H1594" stroke="#2a2a2a" stroke-width="2" fill="none"/><path d="M1577.4,820 L1583.4,815.2 V824.8 Z" fill="#2a2a2a"/><path d="M1590.4,813.6 L1585.6,820 L1590.4,826.4" stroke="#2a2a2a" stroke-width="1.8" fill="none"/><path d="M1590.8,841.4 A4.9,4.9 0 1 1 1582.6,840" stroke="#3a3a3a" stroke-width="2.3" fill="none"/><path d="M1583.6,834.4 L1588.6,840" stroke="#3a3a3a" stroke-width="2.6" fill="none" stroke-linecap="round"/></svg>
<div class="t" style="left:1577.8px;top:855.2px;font-size:13.5px;line-height:15.75px;color:#111;letter-spacing:-0.378px;font-weight:bold;">Aa</div>
<svg class="abs" style="left:821.0px;top:876px" width="12" height="18" viewBox="0 0 12 18"><path d="M6,15.6 V6" stroke="#137a13" stroke-width="2.2"/><path d="M2.2,8.6 L6,3 L9.8,8.6 Z" fill="#137a13"/></svg>
<svg class="abs" style="left:844.8px;top:876px" width="17" height="18" viewBox="0 0 17 18"><path d="M3.4,4 L12.6,14.6 M13,4.4 L3.6,14.4" stroke="#d43a3a" stroke-width="1.6"/><path d="M2,11.4 L14.6,9" stroke="#e7a0a0" stroke-width="1.1"/></svg>
<div class="t" style="left:876.1px;top:876.2px;font-size:15px;line-height:17.50px;color:#111;font-weight:bold;">]</div>
<svg class="abs" style="left:895.4px;top:877px" width="18" height="18" viewBox="0 0 18 18"><g fill="#111" transform="translate(1.6,1.4) scale(.8)"><circle cx="8" cy="4.6" r="2.4"/><path d="M8,6 C11.6,8 10,10.6 9.6,12 C11.6,13 12.4,14.6 12.4,16.4 H3.6 C3.6,14.6 4.4,13 6.4,12 C6,10.6 4.4,8 8,6 Z"/></g><path d="M2,3 L3,5 M1,6 H2.6" stroke="#111" stroke-width=".9"/></svg>
<svg class="abs" style="left:921.2px;top:877px" width="18" height="18" viewBox="0 0 18 18"><g fill="#d02828" transform="translate(1.6,1.4) scale(.8)"><circle cx="8" cy="4.6" r="2.4"/><path d="M8,6 C11.6,8 10,10.6 9.6,12 C11.6,13 12.4,14.6 12.4,16.4 H3.6 C3.6,14.6 4.4,13 6.4,12 C6,10.6 4.4,8 8,6 Z"/></g><path d="M14.4,12 V15" stroke="#d02828" stroke-width="1"/></svg>
<svg class="abs" style="left:947.0px;top:876px" width="18" height="18" viewBox="0 0 18 18"><rect x="0" y="0" width="9" height="9" fill="#e9cfa6"/><rect x="9" y="0" width="9" height="9" fill="#8c5a3c"/><rect x="0" y="9" width="9" height="9" fill="#8c5a3c"/><rect x="9" y="9" width="9" height="9" fill="#e9cfa6"/><g fill="#222"><circle cx="4.4" cy="3" r="1.6"/><path d="M2.4,8 C2.4,5 6.4,5 6.4,8 Z"/><circle cx="13.4" cy="3" r="1.6"/><path d="M11.4,8 C11.4,5 15.4,5 15.4,8 Z"/><circle cx="4.4" cy="12" r="1.6"/><path d="M2.4,17 C2.4,14 6.4,14 6.4,17 Z"/><circle cx="13.4" cy="12" r="1.6"/><path d="M11.4,17 C11.4,14 15.4,14 15.4,17 Z"/></g></svg>
<div class="t" style="left:976.4px;top:874.5px;font-size:19.5px;line-height:22.75px;color:#2a2a2a;font-family:'Liberation Sans','DejaVu Sans',sans-serif;letter-spacing:-0.6px;">!!</div>
<div class="t" style="left:1004.9px;top:874.5px;font-size:19.5px;line-height:22.75px;color:#2a2a2a;font-family:'Liberation Sans','DejaVu Sans',sans-serif;letter-spacing:-0.6px;">!</div>
<div class="t" style="left:1025.3px;top:874.5px;font-size:19.5px;line-height:22.75px;color:#2a2a2a;font-family:'Liberation Sans','DejaVu Sans',sans-serif;letter-spacing:-0.6px;">!?</div>
<div class="t" style="left:1051.1px;top:874.5px;font-size:19.5px;line-height:22.75px;color:#2a2a2a;font-family:'Liberation Sans','DejaVu Sans',sans-serif;letter-spacing:-0.6px;">?!</div>
<div class="t" style="left:1079.6px;top:874.5px;font-size:19.5px;line-height:22.75px;color:#2a2a2a;font-family:'Liberation Sans','DejaVu Sans',sans-serif;letter-spacing:-0.6px;">?</div>
<div class="t" style="left:1100.0px;top:874.5px;font-size:19.5px;line-height:22.75px;color:#2a2a2a;font-family:'Liberation Sans','DejaVu Sans',sans-serif;letter-spacing:-0.6px;">??</div>
<div class="t" style="left:1126.4px;top:875.1px;font-size:17.5px;line-height:20.42px;color:#2a2a2a;font-family:'Liberation Sans','DejaVu Sans',sans-serif;">+−</div>
<div class="t" style="left:1157.6px;top:875.1px;font-size:17.5px;line-height:20.42px;color:#2a2a2a;font-family:'Liberation Sans','DejaVu Sans',sans-serif;">±</div>
<div class="t" style="left:1208.9px;top:875.1px;font-size:17.5px;line-height:20.42px;color:#2a2a2a;font-family:'Liberation Sans','DejaVu Sans',sans-serif;">=</div>
<div class="t" style="left:1233.6px;top:875.1px;font-size:17.5px;line-height:20.42px;color:#2a2a2a;font-family:'Liberation Sans','DejaVu Sans',sans-serif;">∞</div>
<div class="t" style="left:1310.6px;top:875.1px;font-size:17.5px;line-height:20.42px;color:#2a2a2a;font-family:'Liberation Sans','DejaVu Sans',sans-serif;">∓</div>
<div class="t" style="left:1332.8px;top:875.1px;font-size:17.5px;line-height:20.42px;color:#2a2a2a;font-family:'Liberation Sans','DejaVu Sans',sans-serif;">−+</div>
<div class="t" style="left:1362.2px;top:875.1px;font-size:17.5px;line-height:20.42px;color:#2a2a2a;font-family:'Liberation Sans','DejaVu Sans',sans-serif;">⇄</div>
<div class="t" style="left:1495.0px;top:876.1px;font-size:16px;line-height:18.67px;color:#111;font-family:'Liberation Sans','DejaVu Sans',sans-serif;">•</div>
<div class="t" style="left:1183.4px;top:873.3px;font-size:17.5px;line-height:20.42px;color:#2a2a2a;">±</div>
<div class="abs" style="left:1183.2px;top:891.6px;width:10px;height:1.4px;background:#2a2a2a"></div>
<div class="t" style="left:1260.3px;top:872.6px;font-size:15px;line-height:17.50px;color:#2a2a2a;font-family:'Liberation Sans','DejaVu Sans',sans-serif;">∞</div>
<div class="abs" style="left:1260.1px;top:888.6px;width:11px;height:1.4px;background:#2a2a2a;box-shadow:0 3.2px 0 #2a2a2a"></div>
<div class="t" style="left:1284.8px;top:876.7px;font-size:17.5px;line-height:20.42px;color:#2a2a2a;font-family:'Liberation Sans','DejaVu Sans',sans-serif;">∓</div>
<div class="abs" style="left:1286.4px;top:875.6px;width:10px;height:1.4px;background:#2a2a2a"></div>
<svg class="abs" style="left:1384.6px;top:876px" width="20" height="18" viewBox="0 0 20 18"><path d="M2,11 L11,3 L18,8 L9,16 Z" fill="#4a78d8"/><path d="M11,3 L18,8 L15,10.6 L8,5.6 Z" fill="#e86a8a"/><path d="M2,11 L9,16 L9,17 L2,12.4 Z" fill="#2c4f9a"/></svg>
<svg class="abs" style="left:1411.4px;top:876px" width="18" height="18" viewBox="0 0 18 18"><path d="M9,1.6 L11.2,6.6 L16.6,7 L12.4,10.6 L13.8,16 L9,13 L4.2,16 L5.6,10.6 L1.4,7 L6.8,6.6 Z" fill="#f2f2f2" stroke="#b9b9b9" stroke-width="1.2"/></svg>
<svg class="abs" style="left:1437.2px;top:876px" width="19" height="18" viewBox="0 0 19 18"><path d="M9,1.6 L11.2,6.6 L16.6,7 L12.4,10.6 L13.8,16 L9,13 L4.2,16 L5.6,10.6 L1.4,7 L6.8,6.6 Z" fill="#f2f2f2" stroke="#b9b9b9" stroke-width="1.2"/><path d="M14,10 V16 M11,13 H17" stroke="#999" stroke-width="1.6"/></svg>
<svg class="abs" style="left:1463.0px;top:876px" width="18" height="18" viewBox="0 0 18 18"><path d="M2,3 C7,3 11,7 15.6,15 M15.6,2.4 C11,5 7,10 3.4,15.6 M2,3 L8,2" fill="none" stroke="#555" stroke-width="2.2"/></svg>
<svg class="abs" style="left:1518.6px;top:876px" width="10" height="18" viewBox="0 0 10 18"><rect x="2.4" y="1" width="5.2" height="11" rx="2.6" fill="#8f8f8f"/><path d="M3,3.6 H7 M3,6 H7 M3,8.4 H7" stroke="#ddd" stroke-width=".8"/><path d="M1,9 C1,15 9,15 9,9 M5,13.6 V17" fill="none" stroke="#8f8f8f" stroke-width="1"/></svg>
</body>
</html>
